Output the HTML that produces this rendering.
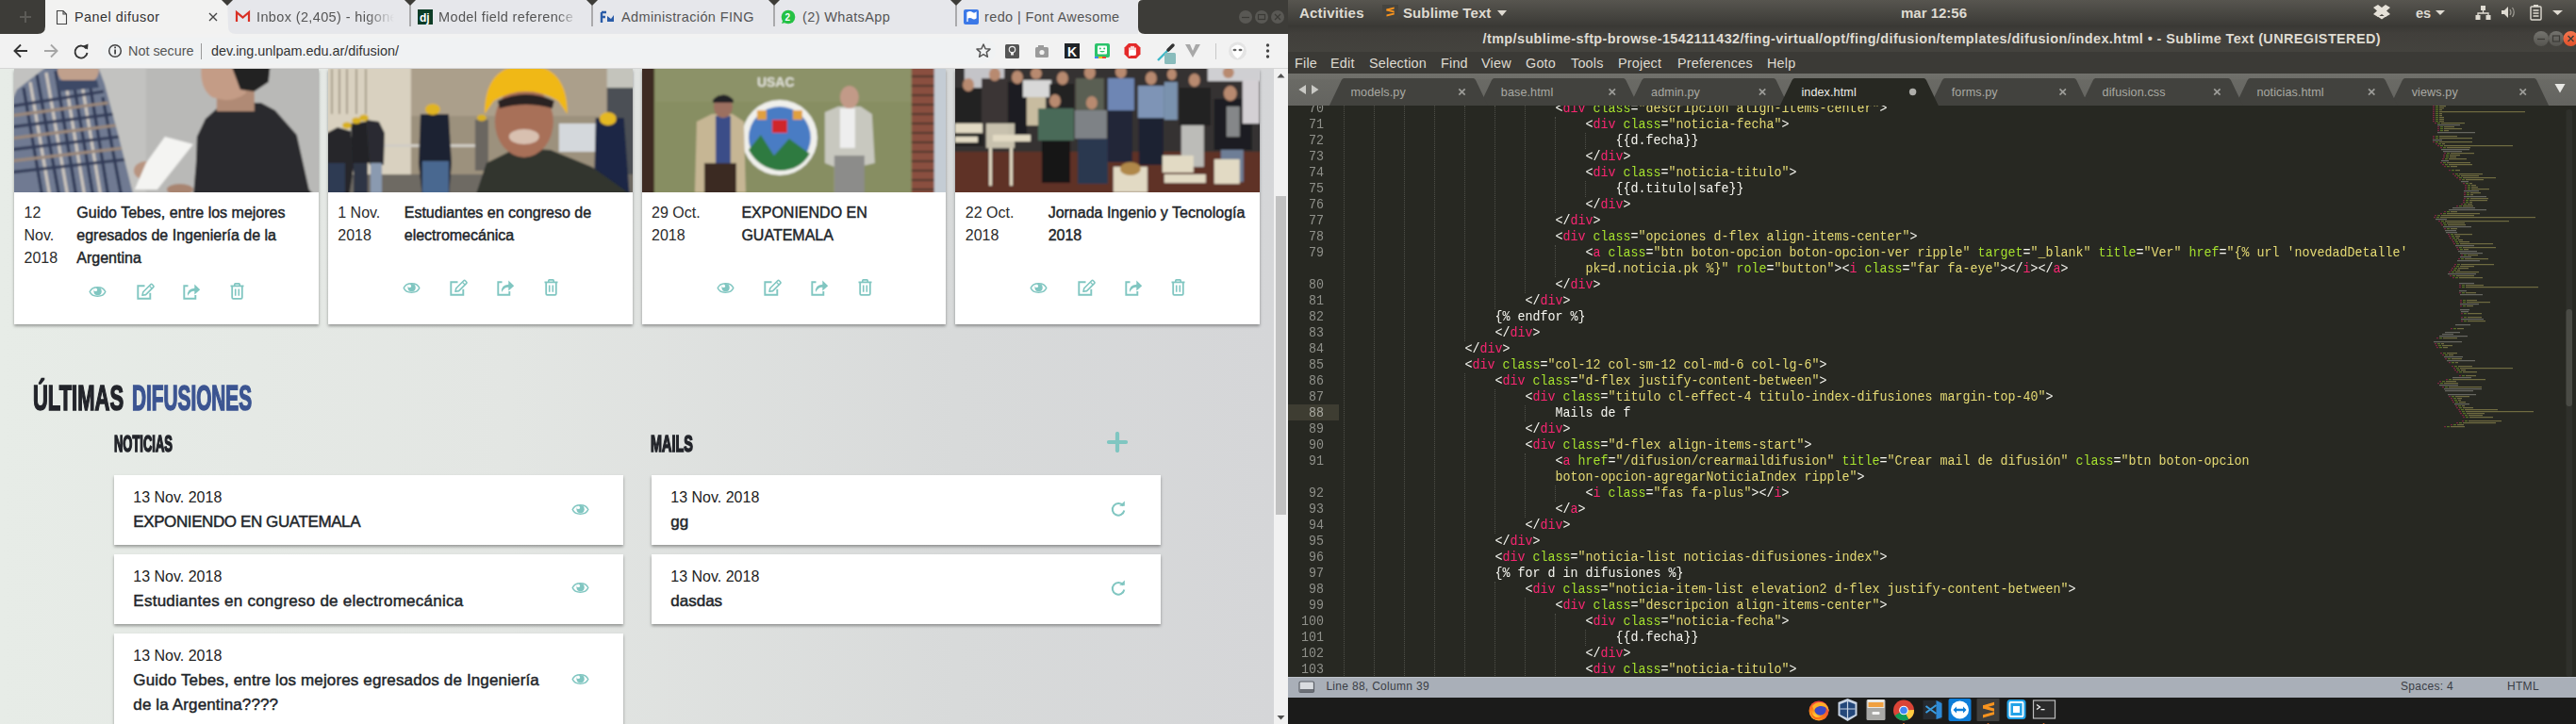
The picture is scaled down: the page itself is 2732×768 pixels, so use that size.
<!DOCTYPE html>
<html><head><meta charset="utf-8">
<style>
*{margin:0;padding:0;box-sizing:border-box}
html,body{width:2732px;height:768px;overflow:hidden;background:#272822}
body{position:relative;font-family:"Liberation Sans",sans-serif}
.abs{position:absolute}
/* ---------- chrome ---------- */
#chrome{position:absolute;left:0;top:0;width:1366px;height:768px;overflow:hidden;background:#e4e9e5}
#tabstrip{position:absolute;left:0;top:0;width:1366px;height:36px;background:#3c3b37}
.ctab{position:absolute;top:0;height:36px;font-size:14.5px;color:#5f6368;white-space:nowrap;overflow:hidden}
#toolbar{position:absolute;left:0;top:36px;width:1366px;height:37px;background:#f2f2f2;border-bottom:1px solid #d6d6d6}
#content{position:absolute;left:0;top:73px;width:1351px;height:695px;overflow:hidden;
 background:linear-gradient(90deg,#e7ece7 0%,#e3e6e3 40%,#d8dada 75%,#d5d6d8 100%)}
#vscroll{position:absolute;left:1351px;top:73px;width:15px;height:695px;background:#f1f1f1}
.card{position:absolute;background:#fff;box-shadow:0 2px 3px rgba(0,0,0,.35)}
.photo{position:absolute;left:0;top:0;width:100%;height:131px;overflow:hidden}
.date{position:absolute;font-size:16px;line-height:24px;color:#2b2b2b}
.ttl{position:absolute;font-size:16px;line-height:24px;color:#212529;-webkit-text-stroke:0.45px #212529}
.ic{position:absolute}
.h1{position:absolute;font-weight:bold;white-space:nowrap;transform-origin:0 0;-webkit-text-stroke:1.6px currentColor}
.item{position:absolute;background:#fff;box-shadow:0 2px 3px rgba(0,0,0,.35)}
.idate{position:absolute;left:20.3px;font-size:16px;color:#222;white-space:nowrap}
.ititle{position:absolute;left:20.3px;font-size:17px;line-height:25px;color:#212529;-webkit-text-stroke:0.45px #212529}
/* ---------- sublime ---------- */
#sub{position:absolute;left:1366px;top:0;width:1366px;height:768px;overflow:hidden;background:#272822}
#topbar{position:absolute;left:0;top:0;width:1366px;height:27px;background:linear-gradient(#57554f,#3b3a36)}
#titlebar{position:absolute;left:0;top:27px;width:1366px;height:28px;background:linear-gradient(#393834,#413f3b 30%,#44433e)}
#menubar{position:absolute;left:0;top:55px;width:1366px;height:23px;background:#3b3a36}
#tabbar{position:absolute;left:0;top:78px;width:1366px;height:34px;background:#5a5a56}
#editor{position:absolute;left:0;top:112px;width:1366px;height:606px;background:#272822;overflow:hidden}
#status{position:absolute;left:0;top:718px;width:1366px;height:22px;background:#a9afb8}
#dock{position:absolute;left:0;top:740px;width:1366px;height:28px;background:#1b1b1a}
.ln{position:absolute;left:1366px;width:54px;height:17px;padding-right:16px;text-align:right;font-family:"Liberation Mono",monospace;font-size:13.33px;line-height:17px;color:#8f908a}
.ln.cur{color:#a8a8a0}
.cl{position:absolute;height:17px;font-family:"Liberation Mono",monospace;font-size:13.33px;line-height:17px;color:#f8f8f2;white-space:pre}
.cl,.ln{transform:scaleY(1.1);transform-origin:0 13px}
.cl .t{color:#f92672}.cl .a{color:#a6e22e}.cl .s{color:#e6db74}
.mi{top:4px;font-size:14.4px;letter-spacing:0.2px;color:#dfdbd2;white-space:nowrap}
.g{position:absolute;width:1px;border-left:1px dotted #4f5049;margin-left:-1px}
</style></head><body>
<div id="chrome">
 <div id="tabstrip">
  <svg class="abs" style="left:0;top:0" width="1366" height="36">
   <rect x="0" y="0" width="1366" height="36" fill="#f2f2f1"/>
   <path d="M0 0 H48 V28 Q48 36 40 36 H0 Z" fill="#3d3c38"/>
   <path d="M48 36 V8 Q48 0 56 0 H233 Q241 0 241 8 V36 Z" fill="#f2f2f1"/>
   <path d="M241 0 H1207 V36 H250 Q242 36 242 28 Z" fill="#e6e7eb"/>
   <path d="M1207 0 H1366 V36 H1214 Q1207 36 1207 29 V5 Q1207 0 1212 0 Z" fill="#3d3c38"/>
   <path d="M235 0 H247 L241 6 Z" fill="#3d3c38"/>
   <path d="M429 0 H441 L435 6 Z" fill="#3d3c38"/><rect x="434.5" y="5" width="1" height="23" fill="#6f6f6f"/>
   <path d="M622 0 H634 L628 6 Z" fill="#3d3c38"/><rect x="627.5" y="5" width="1" height="23" fill="#6f6f6f"/>
   <path d="M815 0 H827 L821 6 Z" fill="#3d3c38"/><rect x="820.5" y="5" width="1" height="23" fill="#6f6f6f"/>
   <path d="M1008 0 H1020 L1014 6 Z" fill="#3d3c38"/><rect x="1013.5" y="5" width="1" height="23" fill="#6f6f6f"/>
   <!-- new tab plus -->
   <path d="M27 12 V24 M21 18 H33" stroke="#5c5b57" stroke-width="2"/>
   <!-- page icon -->
   <path d="M60.5 11.5 H67 L70.5 15 V25.5 H60.5 Z M67 11.5 V15 H70.5" fill="none" stroke="#444" stroke-width="1.1"/>
   <!-- close x -->
   <path d="M222 14 L230 22 M230 14 L222 22" stroke="#444" stroke-width="1.4"/>
   <!-- gmail -->
   <path d="M251 23 V13 L257.5 18.5 L264 13 V23" fill="none" stroke="#d93025" stroke-width="2.2"/>
   <!-- django -->
   <rect x="443" y="10" width="16" height="16" fill="#0c3c26"/>
   <text x="445" y="23" font-size="12" font-weight="bold" fill="#fff" font-family="Liberation Sans">dj</text>
   <!-- fing -->
   <path d="M638 13 H643 M638 13 V24 M638 18 H642" stroke="#2a5ca8" stroke-width="2.4" fill="none"/>
   <path d="M644 17 L648 20 L651 16 V23 H644 Z" fill="#2a5ca8"/>
   <!-- whatsapp -->
   <circle cx="836" cy="18" r="7.3" fill="#25c145"/><path d="M829 25 L830.5 21 L833 24 Z" fill="#25c145"/>
   <text x="832.6" y="22" font-size="10" font-weight="bold" fill="#fff" font-family="Liberation Sans">2</text>
   <!-- font awesome -->
   <rect x="1022" y="10" width="16" height="16" rx="2" fill="#3b78e7"/>
   <path d="M1026 13 V23 M1026 13.5 Q1029 12 1031 13.5 Q1033 15 1035 13.5 V19 Q1033 20.5 1031 19 Q1029 17.5 1026 19" fill="#fff" stroke="#fff" stroke-width="1.3"/>
   <!-- window controls -->
   <circle cx="1321" cy="18" r="7" fill="#595854"/><circle cx="1338" cy="18" r="7" fill="#595854"/><circle cx="1355" cy="18" r="7" fill="#595854"/>
   <path d="M1317 18.5 H1325" stroke="#3b3a36" stroke-width="1.2"/>
   <rect x="1334.5" y="15.5" width="7" height="5" fill="none" stroke="#3b3a36" stroke-width="1.2"/>
   <path d="M1352 15 L1358 21 M1358 15 L1352 21" stroke="#3b3a36" stroke-width="1.2"/>
  </svg>
  <div class="ctab" style="left:79px;top:10px;color:#333;font-size:14.4px;letter-spacing:0.5px">Panel difusor</div>
  <div class="ctab" style="left:272px;top:10px;letter-spacing:0.37px;width:146px;-webkit-mask-image:linear-gradient(90deg,#000 80%,transparent);color:#555">Inbox (2,405) - higonet</div>
  <div class="ctab" style="left:465px;top:10px;letter-spacing:0.37px;width:148px;-webkit-mask-image:linear-gradient(90deg,#000 85%,transparent);color:#555">Model field reference |</div>
  <div class="ctab" style="left:659px;top:10px;letter-spacing:0.37px;color:#555">Administración FING</div>
  <div class="ctab" style="left:851px;top:10px;letter-spacing:0.37px;color:#555">(2) WhatsApp</div>
  <div class="ctab" style="left:1044px;top:10px;letter-spacing:0.37px;color:#555">redo | Font Awesome</div>
 </div>
 <div id="toolbar">
  <svg class="abs" style="left:0;top:0" width="1366" height="37">
   <rect x="108" y="3.7" width="948" height="28" rx="14" fill="#f0f2f3"/>
   <!-- back -->
   <path d="M29 18 H16 M22 11.5 L15.5 18 L22 24.5" fill="none" stroke="#333" stroke-width="1.9"/>
   <path d="M47 18 H60 M54 11.5 L60.5 18 L54 24.5" fill="none" stroke="#a6a6a6" stroke-width="1.9"/>
   <!-- reload -->
   <path d="M91.5 15.5 A6.5 6.5 0 1 0 92.5 20" fill="none" stroke="#333" stroke-width="1.9"/>
   <path d="M87.5 13 L93.5 10.5 L93 16.5 Z" fill="#333"/>
   <!-- info -->
   <circle cx="122" cy="18" r="6.3" fill="none" stroke="#444" stroke-width="1.5"/>
   <rect x="121.2" y="16.5" width="1.8" height="5" fill="#444"/><rect x="121.2" y="13.5" width="1.8" height="1.8" fill="#444"/>
   <rect x="213" y="10" width="1" height="17" fill="#999"/>
   <!-- star -->
   <path d="M1043 11 L1045.1 15.7 L1050 16.1 L1046.3 19.4 L1047.4 24.3 L1043 21.7 L1038.6 24.3 L1039.7 19.4 L1036 16.1 L1040.9 15.7 Z" fill="none" stroke="#555" stroke-width="1.5" stroke-linejoin="round"/>
   <!-- bulb -->
   <rect x="1066" y="11" width="15" height="15" rx="1.5" fill="#555"/>
   <circle cx="1073.5" cy="16.5" r="3.2" fill="none" stroke="#eee" stroke-width="1.2"/><rect x="1072" y="19.5" width="3" height="3" fill="#eee"/>
   <!-- camera -->
   <rect x="1098" y="14" width="14" height="11" rx="1.5" fill="#9a9a9a"/><rect x="1101" y="12" width="6" height="3" fill="#9a9a9a"/><circle cx="1105" cy="19.5" r="2.6" fill="#f2f2f1"/>
   <!-- K -->
   <rect x="1129" y="10" width="16" height="16" fill="#202428"/>
   <text x="1132" y="23.5" font-size="14" font-weight="bold" fill="#fff" font-family="Liberation Sans">K</text>
   <!-- bitmoji green -->
   <rect x="1161" y="10" width="16" height="15" rx="2" fill="#2bc36b"/><rect x="1164" y="12.5" width="10" height="9" rx="1" fill="#fff"/>
   <circle cx="1166.8" cy="15.5" r="1" fill="#2bc36b"/><circle cx="1171.2" cy="15.5" r="1" fill="#2bc36b"/><path d="M1166 18 Q1169 21 1172 18" fill="#2bc36b"/>
   <rect x="1161" y="24" width="4" height="2" fill="#4285f4"/><rect x="1165" y="24" width="4" height="2" fill="#fbbc05"/><rect x="1169" y="24" width="4" height="2" fill="#ea4335"/>
   <!-- adblock -->
   <path d="M1197 10 H1205 L1209.5 14.5 V21.5 L1205 26 H1197 L1192.5 21.5 V14.5 Z" fill="#e42a2a"/>
   <path d="M1198 23 V15 M1200 22 V13.5 M1202 22 V13.5 M1204 22 V15" stroke="#fff" stroke-width="1.6" stroke-linecap="round"/>
   <rect x="1197.5" y="17" width="7" height="6" rx="2" fill="#fff"/>
   <!-- dropper -->
   <path d="M1228 28 L1240 16" stroke="#3db8c8" stroke-width="2.4"/><path d="M1239 17 L1244 12" stroke="#333" stroke-width="3.5" stroke-linecap="round"/>
   <rect x="1235" y="20" width="12" height="12" rx="1.5" fill="#89bcbc"/>
   <!-- V -->
   <path d="M1257 11 H1262 L1265 18 L1268 11 H1273 L1265 25 Z" fill="#a8a8a8"/>
   <rect x="1289" y="10" width="1" height="17" fill="#c8c8c8"/>
   <!-- alien -->
   <circle cx="1312.5" cy="18" r="9.5" fill="#e4e4e4"/><path d="M1306 15 Q1312.5 8 1319 15 Q1318 23 1312.5 26 Q1307 23 1306 15 Z" fill="#fff"/>
   <ellipse cx="1309.5" cy="17" rx="2" ry="1.2" fill="#666"/><ellipse cx="1315.5" cy="17" rx="2" ry="1.2" fill="#666"/>
   <!-- dots -->
   <circle cx="1344.5" cy="12" r="1.7" fill="#444"/><circle cx="1344.5" cy="18" r="1.7" fill="#444"/><circle cx="1344.5" cy="24" r="1.7" fill="#444"/>
  </svg>
  <div class="abs" style="left:136px;top:10px;font-size:14.4px;color:#555;white-space:nowrap">Not secure</div>
  <div class="abs" style="left:224px;top:10px;font-size:14.4px;color:#333;white-space:nowrap">dev.ing.unlpam.edu.ar/difusion/</div>
 </div>
 <div id="content">
<div class="card" style="left:15.00px;top:0;width:322.75px;height:271px">
<svg class="photo" width="323" height="131" viewBox="0 0 323 131"><defs><filter id="bl1" x="-5%" y="-5%" width="110%" height="110%"><feGaussianBlur stdDeviation="1.2"/></filter></defs><g filter="url(#bl1)">
<rect x="-5" y="-5" width="335" height="145" fill="#c2c2c0"/>
<rect x="140" y="-5" width="190" height="145" fill="#b9b9b7"/>
<clipPath id="shirt1"><path d="M38 -5 H88 L96 16 L111 72 L127 136 H-5 V40 L3 22 Z"/></clipPath>
<path d="M38 -5 H88 L96 16 L111 72 L127 136 H-5 V40 L3 22 Z" fill="#6f7a92"/>
<g stroke-width="3.2" opacity=".9" clip-path="url(#shirt1)">
<path d="M10 20 L30 136 M24 6 L48 136 M44 2 L66 136 M62 8 L84 136 M80 14 L100 136 M94 30 L114 136" stroke="#28324e"/>
<path d="M17 14 L38 136 M34 4 L57 136 M53 4 L75 136 M71 10 L92 136" stroke="#d8cfc4"/>
<path d="M-5 40 L95 24 M-5 62 L105 48 M-5 86 L112 72 M-5 110 L120 96" stroke="#2c3552"/>
<path d="M-5 50 L100 36 M-5 74 L108 60 M-5 98 L116 84" stroke="#a08a78"/>
</g>
<ellipse cx="68" cy="2" rx="22" ry="16" fill="#c0a08c"/>
<path d="M45 12 L88 12 L90 20 L48 24 Z" fill="#3e4a66"/>
<ellipse cx="140" cy="108" rx="13" ry="10" fill="#b89480"/>
<path d="M160 72 L190 80 L152 128 L128 128 L140 100 Z" fill="#f4f4f2"/>
<path d="M194 72 L203 53 L222 36 L262 36 L277 44 L300 70 L313 128 L320 136 H190 L193 100 Z" fill="#2b2b2d"/>
<path d="M215 20 H255 V45 H215 Z" fill="#b08a74"/>
<path d="M199 -5 H243 L246 26 Q230 38 210 30 Q196 20 199 -5 Z" fill="#c49c86"/>
<path d="M230 -5 H272 L270 14 L255 24 L240 22 Z" fill="#222020"/>
<ellipse cx="176" cy="128" rx="14" ry="6" fill="#a88470"/>
</g></svg>
<div class="date" style="left:10.5px;top:140.5px">12<br>Nov.<br>2018</div>
<div class="ttl" style="left:66.3px;top:140.5px;white-space:nowrap">Guido Tebes, entre los mejores<br>egresados de Ingeniería de la<br>Argentina</div>
<svg class="ic" style="left:79.0px;top:229.5px" width="19" height="13" viewBox="0 0 19 13"><path d="M1.2 6.5 C3.8 0.2 15.2 0.2 17.8 6.5 C15.2 12.8 3.8 12.8 1.2 6.5 Z" fill="none" stroke="#80c6c1" stroke-width="1.5"/><circle cx="9.6" cy="6.2" r="4.1" fill="#80c6c1"/><circle cx="7.4" cy="4.4" r="1.7" fill="#fff"/></svg><svg class="ic" style="left:129.5px;top:227.0px" width="19" height="18" viewBox="0 0 19 18"><path d="M8.5 3.3 H1.3 V16.8 H14.3 V10.8" fill="none" stroke="#80c6c1" stroke-width="1.9"/><path d="M6 13.3 L6.8 9.8 L14.8 1.8 Q15.6 1 16.4 1.8 L17.6 3 Q18.4 3.8 17.6 4.6 L9.6 12.6 Z" fill="none" stroke="#80c6c1" stroke-width="1.6" stroke-linejoin="round"/><path d="M13.4 3.3 L16.2 6.1" stroke="#80c6c1" stroke-width="1.3"/></svg><svg class="ic" style="left:179.3px;top:227.0px" width="19" height="18" viewBox="0 0 19 18"><path d="M5.5 3.3 H1.3 V16.8 H13.3 V13" fill="none" stroke="#80c6c1" stroke-width="1.9"/><path d="M5 14 Q4.2 6.2 12.3 5.8 V1.6 L18.2 7.2 L12.3 12.6 V8.8 Q7.8 8.6 5 14 Z" fill="#80c6c1"/></svg><svg class="ic" style="left:229.0px;top:227.0px" width="15" height="18" viewBox="0 0 15 18"><path d="M0.5 3.4 H14.5" stroke="#80c6c1" stroke-width="1.8"/><path d="M4.8 3 V1.6 Q4.8 0.9 5.6 0.9 H9.4 Q10.2 0.9 10.2 1.6 V3" fill="none" stroke="#80c6c1" stroke-width="1.6"/><path d="M2.2 3.8 V15.6 Q2.2 16.9 3.4 16.9 H11.6 Q12.8 16.9 12.8 15.6 V3.8" fill="none" stroke="#80c6c1" stroke-width="1.8"/><path d="M5.7 6.5 V13.8 M9.3 6.5 V13.8" stroke="#80c6c1" stroke-width="1.6"/></svg>
</div>
<div class="card" style="left:347.75px;top:0;width:322.75px;height:271px">
<svg class="photo" width="323" height="131" viewBox="0 0 323 131"><defs><filter id="bl2" x="-5%" y="-5%" width="110%" height="110%"><feGaussianBlur stdDeviation="1.2"/></filter></defs><g filter="url(#bl2)">
<rect x="-5" y="-5" width="335" height="145" fill="#9a8e7e"/>
<rect x="-5" y="-5" width="93" height="120" fill="#d9d1c0"/>
<path d="M4 0 V48 M12 0 V48 M20 0 V48 M30 0 V48 M40 0 V48" stroke="#a89e8c" stroke-width="2"/>
<rect x="88" y="-5" width="210" height="55" fill="#ab9f8b"/>
<rect x="88" y="50" width="210" height="62" fill="#9c917d"/>
<rect x="296" y="-5" width="34" height="25" fill="#c4c4bc"/><rect x="296" y="20" width="34" height="116" fill="#4c5054"/>
<rect x="-5" y="112" width="335" height="28" fill="#6e6a64"/>
<rect x="55" y="80" width="110" height="3" fill="#d0ccc4"/>
<path d="M-5 70 L10 62 L24 66 L28 100 L22 136 H-5 Z" fill="#26282c"/>
<path d="M24 58 L40 56 L46 64 L44 100 H26 Z" fill="#222428"/>
<path d="M40 54 L54 56 L60 68 L59 102 H44 Z" fill="#2a2c30"/>
<rect x="0" y="100" width="18" height="36" fill="#2e3a52"/><rect x="27" y="100" width="15" height="36" fill="#2e3444"/><rect x="45" y="100" width="12" height="32" fill="#8a9ab0"/>
<ellipse cx="20" cy="60" rx="5" ry="3.5" fill="#d8b020"/><ellipse cx="30" cy="55" rx="5" ry="3.5" fill="#d8b020"/><ellipse cx="38" cy="52" rx="5" ry="3.5" fill="#d8b020"/>
<path d="M98 48 L128 48 L131 100 L128 136 H100 L96 100 Z" fill="#1f2430"/>
<rect x="100" y="98" width="28" height="38" fill="#4a6890"/>
<ellipse cx="111" cy="43" rx="8" ry="6" fill="#e0b420"/>
<rect x="156" y="54" width="14" height="54" fill="#6a6660"/><ellipse cx="163" cy="52" rx="5" ry="3.5" fill="#d8b020"/>
<path d="M245 58 H285 V88 H245 Z" fill="#d4d8dc"/>
<path d="M284 52 L314 52 L320 136 H282 Z" fill="#1e2844"/>
<ellipse cx="297" cy="53" rx="9" ry="7" fill="#e4b820"/>
<path d="M156 136 L168 100 L200 84 L236 86 L280 104 L325 136 Z" fill="#30342e"/>
<ellipse cx="208" cy="56" rx="31" ry="38" fill="#a87058"/>
<ellipse cx="208" cy="72" rx="16" ry="8" fill="#d8c0b0"/>
<path d="M166 48 Q166 -4 210 -4 Q254 -4 254 48 L244 34 Q210 14 176 34 Z" fill="#f0b818"/>
<path d="M180 34 Q210 20 240 34 L238 42 Q210 34 182 42 Z" fill="#2a2220"/>
</g></svg>
<div class="date" style="left:10.5px;top:140.5px">1 Nov.<br>2018</div>
<div class="ttl" style="left:81.0px;top:140.5px;white-space:nowrap">Estudiantes en congreso de<br>electromecánica</div>
<svg class="ic" style="left:79.0px;top:225.5px" width="19" height="13" viewBox="0 0 19 13"><path d="M1.2 6.5 C3.8 0.2 15.2 0.2 17.8 6.5 C15.2 12.8 3.8 12.8 1.2 6.5 Z" fill="none" stroke="#80c6c1" stroke-width="1.5"/><circle cx="9.6" cy="6.2" r="4.1" fill="#80c6c1"/><circle cx="7.4" cy="4.4" r="1.7" fill="#fff"/></svg><svg class="ic" style="left:129.5px;top:223.0px" width="19" height="18" viewBox="0 0 19 18"><path d="M8.5 3.3 H1.3 V16.8 H14.3 V10.8" fill="none" stroke="#80c6c1" stroke-width="1.9"/><path d="M6 13.3 L6.8 9.8 L14.8 1.8 Q15.6 1 16.4 1.8 L17.6 3 Q18.4 3.8 17.6 4.6 L9.6 12.6 Z" fill="none" stroke="#80c6c1" stroke-width="1.6" stroke-linejoin="round"/><path d="M13.4 3.3 L16.2 6.1" stroke="#80c6c1" stroke-width="1.3"/></svg><svg class="ic" style="left:179.3px;top:223.0px" width="19" height="18" viewBox="0 0 19 18"><path d="M5.5 3.3 H1.3 V16.8 H13.3 V13" fill="none" stroke="#80c6c1" stroke-width="1.9"/><path d="M5 14 Q4.2 6.2 12.3 5.8 V1.6 L18.2 7.2 L12.3 12.6 V8.8 Q7.8 8.6 5 14 Z" fill="#80c6c1"/></svg><svg class="ic" style="left:229.0px;top:223.0px" width="15" height="18" viewBox="0 0 15 18"><path d="M0.5 3.4 H14.5" stroke="#80c6c1" stroke-width="1.8"/><path d="M4.8 3 V1.6 Q4.8 0.9 5.6 0.9 H9.4 Q10.2 0.9 10.2 1.6 V3" fill="none" stroke="#80c6c1" stroke-width="1.6"/><path d="M2.2 3.8 V15.6 Q2.2 16.9 3.4 16.9 H11.6 Q12.8 16.9 12.8 15.6 V3.8" fill="none" stroke="#80c6c1" stroke-width="1.8"/><path d="M5.7 6.5 V13.8 M9.3 6.5 V13.8" stroke="#80c6c1" stroke-width="1.6"/></svg>
</div>
<div class="card" style="left:680.50px;top:0;width:322.75px;height:271px">
<svg class="photo" width="323" height="131" viewBox="0 0 323 131"><defs><filter id="bl3" x="-5%" y="-5%" width="110%" height="110%"><feGaussianBlur stdDeviation="1.2"/></filter></defs><g filter="url(#bl3)">
<rect x="-5" y="-5" width="335" height="145" fill="#878e62"/>
<rect x="14" y="-5" width="272" height="40" fill="#8d946a" opacity=".8"/>
<rect x="-5" y="-5" width="18" height="145" fill="#3e2a22"/>
<rect x="286" y="-5" width="25" height="145" fill="#8a5040"/>
<path d="M286 8 H311 M286 18 H311 M286 28 H311 M286 38 H311 M286 48 H311 M286 58 H311 M286 68 H311 M286 78 H311 M286 88 H311 M286 98 H311 M286 108 H311 M286 118 H311 M286 128 H311" stroke="#4a342c" stroke-width="2"/>
<rect x="310" y="-5" width="18" height="145" fill="#c4ccd4"/>
<text x="122" y="19" font-size="14" font-weight="bold" fill="#e4e4dc" font-family="Liberation Sans">USAC</text>
<circle cx="146" cy="73" r="40" fill="#f0f0ec"/>
<circle cx="146" cy="73" r="33" fill="#4a7cc4"/>
<path d="M113 86 L126 70 L140 92 L156 74 L178 90 Q168 108 146 108 Q124 106 113 86 Z" fill="#2e7a40"/>
<rect x="138" y="54" width="16" height="14" fill="#d0282a"/><rect x="122" y="44" width="10" height="10" fill="#e0a040"/><rect x="160" y="44" width="10" height="10" fill="#e0a040"/>
<path d="M58 56 L74 48 H96 L108 56 L110 131 H56 Z" fill="#c6b694"/>
<rect x="78" y="50" width="16" height="50" fill="#3a4e88"/>
<rect x="66" y="100" width="34" height="36" fill="#3a2a24"/>
<ellipse cx="86" cy="40" rx="10" ry="12" fill="#9c7060"/>
<path d="M75 33 Q86 22 97 33 V36 H75 Z" fill="#202028"/>
<path d="M194 46 L208 40 H232 L244 48 L247 100 L230 104 V136 H204 V104 L194 100 Z" fill="#c8c8bf"/>
<rect x="210" y="42" width="16" height="42" fill="#eeeeee"/>
<rect x="204" y="92" width="32" height="44" fill="#8c8c8a"/>
<ellipse cx="220" cy="30" rx="10" ry="12" fill="#c29a88"/>
</g></svg>
<div class="date" style="left:10.5px;top:140.5px">29 Oct.<br>2018</div>
<div class="ttl" style="left:105.9px;top:140.5px;white-space:nowrap">EXPONIENDO EN<br>GUATEMALA</div>
<svg class="ic" style="left:79.0px;top:225.5px" width="19" height="13" viewBox="0 0 19 13"><path d="M1.2 6.5 C3.8 0.2 15.2 0.2 17.8 6.5 C15.2 12.8 3.8 12.8 1.2 6.5 Z" fill="none" stroke="#80c6c1" stroke-width="1.5"/><circle cx="9.6" cy="6.2" r="4.1" fill="#80c6c1"/><circle cx="7.4" cy="4.4" r="1.7" fill="#fff"/></svg><svg class="ic" style="left:129.5px;top:223.0px" width="19" height="18" viewBox="0 0 19 18"><path d="M8.5 3.3 H1.3 V16.8 H14.3 V10.8" fill="none" stroke="#80c6c1" stroke-width="1.9"/><path d="M6 13.3 L6.8 9.8 L14.8 1.8 Q15.6 1 16.4 1.8 L17.6 3 Q18.4 3.8 17.6 4.6 L9.6 12.6 Z" fill="none" stroke="#80c6c1" stroke-width="1.6" stroke-linejoin="round"/><path d="M13.4 3.3 L16.2 6.1" stroke="#80c6c1" stroke-width="1.3"/></svg><svg class="ic" style="left:179.3px;top:223.0px" width="19" height="18" viewBox="0 0 19 18"><path d="M5.5 3.3 H1.3 V16.8 H13.3 V13" fill="none" stroke="#80c6c1" stroke-width="1.9"/><path d="M5 14 Q4.2 6.2 12.3 5.8 V1.6 L18.2 7.2 L12.3 12.6 V8.8 Q7.8 8.6 5 14 Z" fill="#80c6c1"/></svg><svg class="ic" style="left:229.0px;top:223.0px" width="15" height="18" viewBox="0 0 15 18"><path d="M0.5 3.4 H14.5" stroke="#80c6c1" stroke-width="1.8"/><path d="M4.8 3 V1.6 Q4.8 0.9 5.6 0.9 H9.4 Q10.2 0.9 10.2 1.6 V3" fill="none" stroke="#80c6c1" stroke-width="1.6"/><path d="M2.2 3.8 V15.6 Q2.2 16.9 3.4 16.9 H11.6 Q12.8 16.9 12.8 15.6 V3.8" fill="none" stroke="#80c6c1" stroke-width="1.8"/><path d="M5.7 6.5 V13.8 M9.3 6.5 V13.8" stroke="#80c6c1" stroke-width="1.6"/></svg>
</div>
<div class="card" style="left:1013.25px;top:0;width:322.75px;height:271px">
<svg class="photo" width="323" height="131" viewBox="0 0 323 131"><defs><filter id="bl4" x="-5%" y="-5%" width="110%" height="110%"><feGaussianBlur stdDeviation="1.2"/></filter></defs><g filter="url(#bl4)">
<rect x="-5" y="-5" width="335" height="145" fill="#353030"/>
<rect x="10" y="-5" width="42" height="26" fill="#c4c4c8"/>
<rect x="268" y="-5" width="60" height="18" fill="#cfcfd2"/>
<rect x="-5" y="88" width="335" height="55" fill="#5e3028"/>
<g>
<rect x="0" y="20" width="30" height="62" fill="#242424"/>
<rect x="28" y="10" width="28" height="60" fill="#3a3434"/>
<rect x="56" y="14" width="20" height="60" fill="#1e1e20"/>
<rect x="72" y="12" width="30" height="18" fill="#d8d8d8"/>
<rect x="76" y="30" width="20" height="30" fill="#c8bca0"/>
<rect x="100" y="16" width="26" height="36" fill="#222222"/>
<rect x="128" y="10" width="30" height="46" fill="#5a5e52"/>
<rect x="88" y="42" width="38" height="34" fill="#4a6a58"/><rect x="92" y="76" width="30" height="45" fill="#161616"/>
<rect x="127" y="44" width="34" height="30" fill="#7e8286"/><rect x="130" y="74" width="32" height="48" fill="#2c3850"/>
<rect x="162" y="10" width="28" height="34" fill="#6e86b4"/><rect x="162" y="44" width="26" height="55" fill="#222638"/>
<rect x="194" y="18" width="28" height="34" fill="#7e94b6"/><rect x="195" y="52" width="26" height="50" fill="#1e2230"/>
<rect x="222" y="14" width="14" height="40" fill="#7a92ae"/>
<rect x="238" y="20" width="33" height="40" fill="#202022"/><rect x="240" y="60" width="24" height="44" fill="#bcbcb8"/>
<rect x="275" y="32" width="40" height="54" fill="#1e1e20"/><rect x="288" y="40" width="14" height="32" fill="#858789"/><rect x="282" y="86" width="24" height="34" fill="#6e7e96"/>
<rect x="305" y="12" width="18" height="46" fill="#d4d0d4"/>
</g>
<g fill="#b88a70">
<ellipse cx="14" cy="17" rx="6" ry="7"/><ellipse cx="42" cy="6" rx="6" ry="7"/><ellipse cx="66" cy="9" rx="6" ry="7"/><ellipse cx="86" cy="5" rx="6" ry="6"/>
<ellipse cx="114" cy="10" rx="6" ry="7"/><ellipse cx="143" cy="4" rx="6" ry="7"/><ellipse cx="176" cy="3" rx="6" ry="7"/><ellipse cx="208" cy="10" rx="6" ry="7"/>
<ellipse cx="254" cy="12" rx="6" ry="7"/><ellipse cx="292" cy="26" rx="7" ry="8"/><ellipse cx="106" cy="34" rx="6" ry="7"/><ellipse cx="145" cy="36" rx="6" ry="7"/>
<ellipse cx="290" cy="4" rx="6" ry="6"/><ellipse cx="230" cy="6" rx="5" ry="6"/>
</g>
<g fill="#e2dac4">
<rect x="0" y="58" width="29" height="10"/><rect x="0" y="72" width="24" height="6"/>
<rect x="33" y="58" width="30" height="26" opacity=".85"/><rect x="40" y="70" width="40" height="7"/><rect x="36" y="84" width="3" height="40"/><rect x="58" y="84" width="3" height="40"/>
<rect x="168" y="104" width="36" height="27"/>
<rect x="220" y="92" width="33" height="18"/><rect x="222" y="112" width="44" height="9"/>
<rect x="275" y="96" width="27" height="26"/>
</g>
<ellipse cx="186" cy="106" rx="11" ry="7" fill="#b08848"/>
</g></svg>
<div class="date" style="left:10.5px;top:140.5px">22 Oct.<br>2018</div>
<div class="ttl" style="left:98.4px;top:140.5px;white-space:nowrap">Jornada Ingenio y Tecnología<br>2018</div>
<svg class="ic" style="left:79.0px;top:225.5px" width="19" height="13" viewBox="0 0 19 13"><path d="M1.2 6.5 C3.8 0.2 15.2 0.2 17.8 6.5 C15.2 12.8 3.8 12.8 1.2 6.5 Z" fill="none" stroke="#80c6c1" stroke-width="1.5"/><circle cx="9.6" cy="6.2" r="4.1" fill="#80c6c1"/><circle cx="7.4" cy="4.4" r="1.7" fill="#fff"/></svg><svg class="ic" style="left:129.5px;top:223.0px" width="19" height="18" viewBox="0 0 19 18"><path d="M8.5 3.3 H1.3 V16.8 H14.3 V10.8" fill="none" stroke="#80c6c1" stroke-width="1.9"/><path d="M6 13.3 L6.8 9.8 L14.8 1.8 Q15.6 1 16.4 1.8 L17.6 3 Q18.4 3.8 17.6 4.6 L9.6 12.6 Z" fill="none" stroke="#80c6c1" stroke-width="1.6" stroke-linejoin="round"/><path d="M13.4 3.3 L16.2 6.1" stroke="#80c6c1" stroke-width="1.3"/></svg><svg class="ic" style="left:179.3px;top:223.0px" width="19" height="18" viewBox="0 0 19 18"><path d="M5.5 3.3 H1.3 V16.8 H13.3 V13" fill="none" stroke="#80c6c1" stroke-width="1.9"/><path d="M5 14 Q4.2 6.2 12.3 5.8 V1.6 L18.2 7.2 L12.3 12.6 V8.8 Q7.8 8.6 5 14 Z" fill="#80c6c1"/></svg><svg class="ic" style="left:229.0px;top:223.0px" width="15" height="18" viewBox="0 0 15 18"><path d="M0.5 3.4 H14.5" stroke="#80c6c1" stroke-width="1.8"/><path d="M4.8 3 V1.6 Q4.8 0.9 5.6 0.9 H9.4 Q10.2 0.9 10.2 1.6 V3" fill="none" stroke="#80c6c1" stroke-width="1.6"/><path d="M2.2 3.8 V15.6 Q2.2 16.9 3.4 16.9 H11.6 Q12.8 16.9 12.8 15.6 V3.8" fill="none" stroke="#80c6c1" stroke-width="1.8"/><path d="M5.7 6.5 V13.8 M9.3 6.5 V13.8" stroke="#80c6c1" stroke-width="1.6"/></svg>
</div>
<div class="h1" style="left:35px;top:330.7px;font-size:37px;line-height:37px;color:#22242a;transform:scaleX(0.594)">ÚLTIMAS</div>
<div class="h1" style="left:140px;top:330.7px;font-size:37px;line-height:37px;color:#3b5491;transform:scaleX(0.562)">DIFUSIONES</div>
<div class="h1" style="left:121px;top:385.7px;font-size:24px;line-height:24px;color:#22242a;transform:scaleX(0.54)">NOTICIAS</div>
<div class="h1" style="left:690.4px;top:385.7px;font-size:24px;line-height:24px;color:#22242a;transform:scaleX(0.6)">MAILS</div>
<svg class="ic" style="left:1174.0px;top:385.0px" width="22" height="22" viewBox="0 0 22 22"><path d="M11 2 V20 M2 11 H20" stroke="#80c6c1" stroke-width="4.2" stroke-linecap="round"/></svg>
<div class="item" style="left:121px;top:431.0px;width:540px;height:73.7px">
<div class="idate" style="top:11.6px;line-height:24px">13 Nov. 2018</div>
<div class="ititle" style="top:37px;line-height:26px;letter-spacing:-0.4px">EXPONIENDO EN GUATEMALA</div>
<svg class="ic" style="left:484.5px;top:29.5px" width="19" height="13" viewBox="0 0 19 13"><path d="M1.2 6.5 C3.8 0.2 15.2 0.2 17.8 6.5 C15.2 12.8 3.8 12.8 1.2 6.5 Z" fill="none" stroke="#80c6c1" stroke-width="1.5"/><circle cx="9.6" cy="6.2" r="4.1" fill="#80c6c1"/><circle cx="7.4" cy="4.4" r="1.7" fill="#fff"/></svg>
</div>
<div class="item" style="left:121px;top:515.0px;width:540px;height:74.0px">
<div class="idate" style="top:11.6px;line-height:24px">13 Nov. 2018</div>
<div class="ititle" style="top:37px;line-height:26px;letter-spacing:0.26px">Estudiantes en congreso de electromecánica</div>
<svg class="ic" style="left:484.5px;top:29.2px" width="19" height="13" viewBox="0 0 19 13"><path d="M1.2 6.5 C3.8 0.2 15.2 0.2 17.8 6.5 C15.2 12.8 3.8 12.8 1.2 6.5 Z" fill="none" stroke="#80c6c1" stroke-width="1.5"/><circle cx="9.6" cy="6.2" r="4.1" fill="#80c6c1"/><circle cx="7.4" cy="4.4" r="1.7" fill="#fff"/></svg>
</div>
<div class="item" style="left:121px;top:599.0px;width:540px;height:120.0px">
<div class="idate" style="top:11.6px;line-height:24px">13 Nov. 2018</div>
<div class="ititle" style="top:37px;line-height:26px;letter-spacing:0.14px">Guido Tebes, entre los mejores egresados de Ingeniería<br>de la Argentina????</div>
<svg class="ic" style="left:484.5px;top:42.1px" width="19" height="13" viewBox="0 0 19 13"><path d="M1.2 6.5 C3.8 0.2 15.2 0.2 17.8 6.5 C15.2 12.8 3.8 12.8 1.2 6.5 Z" fill="none" stroke="#80c6c1" stroke-width="1.5"/><circle cx="9.6" cy="6.2" r="4.1" fill="#80c6c1"/><circle cx="7.4" cy="4.4" r="1.7" fill="#fff"/></svg>
</div>
<div class="item" style="left:691px;top:431.0px;width:540px;height:73.7px">
<div class="idate" style="top:11.6px;line-height:24px">13 Nov. 2018</div>
<div class="ititle" style="top:37px;line-height:26px">gg</div>
<svg class="ic" style="left:486.0px;top:27.0px" width="18" height="18" viewBox="0 0 18 18"><path d="M14.2 5.6 A6.3 6.3 0 1 0 15.3 10.5" fill="none" stroke="#80c6c1" stroke-width="2"/><path d="M10.2 5.8 H15.8 V0.4 Z" fill="#80c6c1"/></svg>
</div>
<div class="item" style="left:691px;top:515.0px;width:540px;height:74.0px">
<div class="idate" style="top:11.6px;line-height:24px">13 Nov. 2018</div>
<div class="ititle" style="top:37px;line-height:26px">dasdas</div>
<svg class="ic" style="left:486.0px;top:27.0px" width="18" height="18" viewBox="0 0 18 18"><path d="M14.2 5.6 A6.3 6.3 0 1 0 15.3 10.5" fill="none" stroke="#80c6c1" stroke-width="2"/><path d="M10.2 5.8 H15.8 V0.4 Z" fill="#80c6c1"/></svg>
</div>
</div>
 <div id="vscroll"><svg class="abs" style="left:0;top:0" width="15" height="695"><path d="M3.5 9.5 H11.5 L7.5 5 Z M3.5 686 H11.5 L7.5 690.5 Z" fill="#505050"/></svg><div class="abs" style="left:2px;top:135px;width:11px;height:338px;background:#c1c1c1"></div></div>
</div>
<div id="sub">
 <div id="topbar">
  <div class="abs" style="left:12px;top:4.5px;font-size:15px;letter-spacing:0.2px;font-weight:bold;color:#dfdbd2;white-space:nowrap">Activities</div>
  <svg class="abs" style="left:100px;top:4px" width="18" height="20"><rect x="0" y="1" width="17" height="16" fill="#45443f"/><g transform="translate(4.5,3.5) scale(0.82,0.72)" fill="#f7931e"><path d="M10 0 L0 2.9 V5.6 L10 2.7 Z"/><path d="M0 2.8 L10 5.7 V8.4 L0 5.5 Z"/><path d="M10 8.5 L0 11.2 V14 L10 11.1 Z"/></g></svg>
  <div class="abs" style="left:122px;top:4.5px;font-size:15px;letter-spacing:0.1px;font-weight:bold;color:#dfdbd2;white-space:nowrap">Sublime Text</div>
  <svg class="abs" style="left:221px;top:10px" width="12" height="8"><path d="M1 1 H11 L6 7 Z" fill="#dfdbd2"/></svg>
  <div class="abs" style="left:650px;top:4.5px;font-size:15px;font-weight:bold;color:#dfdbd2;white-space:nowrap">mar 12:56</div>
  <svg class="abs" style="left:1150px;top:4px" width="216" height="20">
   <path d="M1 4 L6 1 L10 4 L14 1 L19 4 L15 7.5 L19 11 L14 14 L10 11 L6 14 L1 11 L5 7.5 Z" fill="#e5e1d8"/>
   <path d="M5 13 L10 16.5 L15 13" fill="#e5e1d8"/>
   <text x="46" y="15" font-size="14.6" font-weight="bold" fill="#dfdbd2" font-family="Liberation Sans">es</text>
   <path d="M67 7 H77 L72 12 Z" fill="#dfdbd2"/>
<g transform="translate(9,0)">   <rect x="106" y="2" width="5" height="5" fill="#dfdbd2"/><path d="M108.5 7 V10 M103 13 V10 H114 V13" fill="none" stroke="#dfdbd2" stroke-width="1.3"/>
   <rect x="100.5" y="12" width="5" height="5" fill="#dfdbd2"/><rect x="111.5" y="12" width="5" height="5" fill="#dfdbd2"/></g>
<g transform="translate(8,0)">   <path d="M129 7 H132 L136 3 V15 L132 11 H129 Z" fill="#dfdbd2"/><path d="M138 6 Q140 9 138 12 M140.5 4 Q144 9 140.5 14" fill="none" stroke="#9a9890" stroke-width="1.3"/></g>
<g transform="translate(9,0)">   <rect x="159" y="3" width="11" height="14" rx="1" fill="none" stroke="#dfdbd2" stroke-width="1.4"/><rect x="162" y="1" width="5" height="2" fill="#dfdbd2"/>
   <path d="M161.5 7 H167.5 M161.5 10 H167.5 M161.5 13 H167.5" stroke="#dfdbd2" stroke-width="1.4"/></g>
   <path d="M191 7 H202 L196.5 12 Z" fill="#dfdbd2"/>
  </svg>
 </div>
 <div id="titlebar">
  <div class="abs" style="left:206.5px;top:6px;width:1000px;font-size:14.4px;letter-spacing:0.42px;font-weight:bold;color:#dfdbd2;white-space:nowrap;text-align:left">/tmp/sublime-sftp-browse-1542111432/fing-virtual/opt/fing/difusion/templates/difusion/index.html • - Sublime Text (UNREGISTERED)</div>
  <svg class="abs" style="left:1316px;top:0" width="50" height="28">
   <defs><linearGradient id="wb" x1="0" y1="0" x2="0" y2="1"><stop offset="0" stop-color="#75746f"/><stop offset="1" stop-color="#55544f"/></linearGradient>
   <linearGradient id="wc" x1="0" y1="0" x2="0" y2="1"><stop offset="0" stop-color="#f6774f"/><stop offset="1" stop-color="#e0502a"/></linearGradient></defs>
   <circle cx="13" cy="14" r="8" fill="url(#wb)"/><circle cx="29" cy="14" r="8" fill="url(#wb)"/><circle cx="44.5" cy="14" r="8" fill="url(#wc)"/>
   <path d="M9 14.5 H17" stroke="#3c3b37" stroke-width="1.3"/>
   <rect x="25.5" y="11" width="7" height="6" fill="none" stroke="#3c3b37" stroke-width="1.2"/>
   <path d="M41.5 11 L47.5 17 M47.5 11 L41.5 17" stroke="#3c3b37" stroke-width="1.4"/>
  </svg>
 </div>
 <div id="menubar">
  <div class="abs mi" style="left:7px">File</div><div class="abs mi" style="left:45px">Edit</div><div class="abs mi" style="left:86px">Selection</div>
  <div class="abs mi" style="left:162px">Find</div><div class="abs mi" style="left:205px">View</div><div class="abs mi" style="left:252px">Goto</div>
  <div class="abs mi" style="left:300px">Tools</div><div class="abs mi" style="left:350px">Project</div><div class="abs mi" style="left:413px">Preferences</div>
  <div class="abs mi" style="left:508px">Help</div>
 </div>
 <div id="tabbar"><svg class="abs" style="left:0;top:0" width="1366" height="34">
<defs><linearGradient id="tbg" x1="0" y1="0" x2="0" y2="1"><stop offset="0" stop-color="#71716c"/><stop offset=".17" stop-color="#6e6e69"/><stop offset=".2" stop-color="#6a6a65"/><stop offset="1" stop-color="#646460"/></linearGradient></defs>
<rect x="0" y="0" width="1366" height="34" fill="url(#tbg)"/>
<path d="M1169.1 34 L1181.7 7.5 Q1182.6 5 1184.5 5 H1321.7 Q1323.6 5 1324.5 7.5 L1337.1 34 Z" fill="#42423e"/>
<path d="M1004.8 34 L1017.4 7.5 Q1018.3 5 1020.2 5 H1161.2 Q1163.1 5 1164.0 7.5 L1176.6 34 Z" fill="#42423e"/>
<path d="M841.0 34 L853.6 7.5 Q854.5 5 856.4 5 H997.4 Q999.3 5 1000.2 7.5 L1012.8 34 Z" fill="#42423e"/>
<path d="M681.1 34 L693.7 7.5 Q694.6 5 696.5 5 H833.7 Q835.6 5 836.5 7.5 L849.1 34 Z" fill="#42423e"/>
<path d="M362.5 34 L375.1 7.5 Q376.0 5 377.9 5 H515.1 Q517.0 5 517.9 7.5 L530.5 34 Z" fill="#42423e"/>
<path d="M203.2 34 L215.8 7.5 Q216.7 5 218.6 5 H355.8 Q357.7 5 358.6 7.5 L371.2 34 Z" fill="#42423e"/>
<path d="M43.9 34 L56.5 7.5 Q57.4 5 59.3 5 H196.5 Q198.4 5 199.3 7.5 L211.9 34 Z" fill="#42423e"/>
<path d="M521.8 34 L534.4 7.5 Q535.3 5 537.2 5 H674.4 Q676.3 5 677.2 7.5 L689.8 34 Z" fill="#272822"/>
<path d="M11.3 17 L19 12 V22 Z M25 12 L32.5 17 L25 22 Z" fill="#c9c9c5"/>
<path d="M181.3 16.3 L187.7 22.7 M187.7 16.3 L181.3 22.7" stroke="#9c9c98" stroke-width="1.7"/>
<path d="M340.6 16.3 L347.0 22.7 M347.0 16.3 L340.6 22.7" stroke="#9c9c98" stroke-width="1.7"/>
<path d="M499.9 16.3 L506.3 22.7 M506.3 16.3 L499.9 22.7" stroke="#9c9c98" stroke-width="1.7"/>
<circle cx="662.6" cy="19.5" r="3.7" fill="#aeaeaa"/>
<path d="M818.5 16.3 L824.9 22.7 M824.9 16.3 L818.5 22.7" stroke="#9c9c98" stroke-width="1.7"/>
<path d="M982.2 16.3 L988.6 22.7 M988.6 16.3 L982.2 22.7" stroke="#9c9c98" stroke-width="1.7"/>
<path d="M1146.0 16.3 L1152.4 22.7 M1152.4 16.3 L1146.0 22.7" stroke="#9c9c98" stroke-width="1.7"/>
<path d="M1306.5 16.3 L1312.9 22.7 M1312.9 16.3 L1306.5 22.7" stroke="#9c9c98" stroke-width="1.7"/>
<path d="M1343.5 11 H1354.5 L1349 20.5 Z" fill="#e8e8e4"/>
</svg>
<div class="abs" style="left:66.5px;top:13px;font-size:12.6px;letter-spacing:0.1px;color:#a9a9a3;white-space:nowrap">models.py</div>
<div class="abs" style="left:225.8px;top:13px;font-size:12.6px;letter-spacing:0.1px;color:#a9a9a3;white-space:nowrap">base.html</div>
<div class="abs" style="left:385.1px;top:13px;font-size:12.6px;letter-spacing:0.1px;color:#a9a9a3;white-space:nowrap">admin.py</div>
<div class="abs" style="left:544.4px;top:13px;font-size:12.6px;letter-spacing:0.1px;color:#eeeeea;white-space:nowrap">index.html</div>
<div class="abs" style="left:703.7px;top:13px;font-size:12.6px;letter-spacing:0.1px;color:#a9a9a3;white-space:nowrap">forms.py</div>
<div class="abs" style="left:863.6px;top:13px;font-size:12.6px;letter-spacing:0.1px;color:#a9a9a3;white-space:nowrap">difusion.css</div>
<div class="abs" style="left:1027.4px;top:13px;font-size:12.6px;letter-spacing:0.1px;color:#a9a9a3;white-space:nowrap">noticias.html</div>
<div class="abs" style="left:1191.7px;top:13px;font-size:12.6px;letter-spacing:0.1px;color:#a9a9a3;white-space:nowrap">views.py</div></div>
 <div id="editor"><svg class="abs" style="left:1214px;top:0" width="152" height="606">
<rect x="0" y="0" width="2" height="1.2" fill="#f92672" opacity=".38"/>
<rect x="3" y="0" width="3" height="1.2" fill="#a6e22e" opacity=".38"/>
<rect x="7" y="0" width="7" height="1.2" fill="#e6db74" opacity=".38"/>
<rect x="0" y="2" width="2" height="1.2" fill="#f92672" opacity=".38"/>
<rect x="3" y="2" width="3" height="1.2" fill="#a6e22e" opacity=".38"/>
<rect x="7" y="2" width="5" height="1.2" fill="#e6db74" opacity=".38"/>
<rect x="0" y="4" width="2" height="1.2" fill="#f92672" opacity=".38"/>
<rect x="3" y="4" width="3" height="1.2" fill="#a6e22e" opacity=".38"/>
<rect x="7" y="4" width="3" height="1.2" fill="#e6db74" opacity=".38"/>
<rect x="0" y="6" width="2" height="1.2" fill="#f92672" opacity=".38"/>
<rect x="3" y="6" width="3" height="1.2" fill="#a6e22e" opacity=".38"/>
<rect x="7" y="6" width="91" height="1.2" fill="#e6db74" opacity=".38"/>
<rect x="0" y="8" width="2" height="1.2" fill="#f92672" opacity=".38"/>
<rect x="3" y="8" width="3" height="1.2" fill="#a6e22e" opacity=".38"/>
<rect x="7" y="8" width="3" height="1.2" fill="#e6db74" opacity=".38"/>
<rect x="0" y="10" width="2" height="1.2" fill="#f92672" opacity=".38"/>
<rect x="3" y="10" width="3" height="1.2" fill="#a6e22e" opacity=".38"/>
<rect x="7" y="10" width="3" height="1.2" fill="#e6db74" opacity=".38"/>
<rect x="0" y="12" width="2" height="1.2" fill="#f92672" opacity=".38"/>
<rect x="3" y="12" width="3" height="1.2" fill="#a6e22e" opacity=".38"/>
<rect x="7" y="12" width="5" height="1.2" fill="#e6db74" opacity=".38"/>
<rect x="0" y="14" width="2" height="1.2" fill="#f92672" opacity=".38"/>
<rect x="3" y="14" width="3" height="1.2" fill="#a6e22e" opacity=".38"/>
<rect x="7" y="14" width="5" height="1.2" fill="#e6db74" opacity=".38"/>
<rect x="0" y="16" width="2" height="1.2" fill="#f92672" opacity=".38"/>
<rect x="3" y="16" width="3" height="1.2" fill="#a6e22e" opacity=".38"/>
<rect x="7" y="16" width="5" height="1.2" fill="#e6db74" opacity=".38"/>
<rect x="2" y="18" width="2" height="1.2" fill="#f92672" opacity=".38"/>
<rect x="5" y="18" width="3" height="1.2" fill="#a6e22e" opacity=".38"/>
<rect x="9" y="18" width="25" height="1.2" fill="#e6db74" opacity=".38"/>
<rect x="5" y="20" width="24" height="1.2" fill="#cfcfc8" opacity=".38"/>
<rect x="5" y="22" width="2" height="1.2" fill="#f92672" opacity=".38"/>
<rect x="8" y="22" width="3" height="1.2" fill="#a6e22e" opacity=".38"/>
<rect x="12" y="22" width="11" height="1.2" fill="#e6db74" opacity=".38"/>
<rect x="5" y="24" width="2" height="1.2" fill="#f92672" opacity=".38"/>
<rect x="8" y="24" width="3" height="1.2" fill="#a6e22e" opacity=".38"/>
<rect x="12" y="24" width="19" height="1.2" fill="#e6db74" opacity=".38"/>
<rect x="5" y="26" width="2" height="1.2" fill="#f92672" opacity=".38"/>
<rect x="8" y="26" width="3" height="1.2" fill="#a6e22e" opacity=".38"/>
<rect x="12" y="26" width="5" height="1.2" fill="#e6db74" opacity=".38"/>
<rect x="5" y="28" width="40" height="1.2" fill="#cfcfc8" opacity=".38"/>
<rect x="0" y="32" width="2" height="1.2" fill="#f92672" opacity=".38"/>
<rect x="3" y="32" width="3" height="1.2" fill="#a6e22e" opacity=".38"/>
<rect x="7" y="32" width="19" height="1.2" fill="#e6db74" opacity=".38"/>
<rect x="0" y="34" width="2" height="1.2" fill="#f92672" opacity=".38"/>
<rect x="3" y="34" width="3" height="1.2" fill="#a6e22e" opacity=".38"/>
<rect x="7" y="34" width="35" height="1.2" fill="#e6db74" opacity=".38"/>
<rect x="0" y="36" width="10" height="1.2" fill="#cfcfc8" opacity=".38"/>
<rect x="0" y="38" width="2" height="1.2" fill="#f92672" opacity=".38"/>
<rect x="3" y="38" width="3" height="1.2" fill="#a6e22e" opacity=".38"/>
<rect x="7" y="38" width="35" height="1.2" fill="#e6db74" opacity=".38"/>
<rect x="3" y="40" width="2" height="1.2" fill="#f92672" opacity=".38"/>
<rect x="6" y="40" width="3" height="1.2" fill="#a6e22e" opacity=".38"/>
<rect x="10" y="40" width="3" height="1.2" fill="#e6db74" opacity=".38"/>
<rect x="5" y="42" width="2" height="1.2" fill="#f92672" opacity=".38"/>
<rect x="8" y="42" width="3" height="1.2" fill="#a6e22e" opacity=".38"/>
<rect x="12" y="42" width="73" height="1.2" fill="#e6db74" opacity=".38"/>
<rect x="8" y="44" width="2" height="1.2" fill="#f92672" opacity=".38"/>
<rect x="11" y="44" width="3" height="1.2" fill="#a6e22e" opacity=".38"/>
<rect x="15" y="44" width="25" height="1.2" fill="#e6db74" opacity=".38"/>
<rect x="9" y="46" width="30" height="1.2" fill="#cfcfc8" opacity=".38"/>
<rect x="11" y="48" width="20" height="1.2" fill="#cfcfc8" opacity=".38"/>
<rect x="12" y="50" width="2" height="1.2" fill="#f92672" opacity=".38"/>
<rect x="15" y="50" width="3" height="1.2" fill="#a6e22e" opacity=".38"/>
<rect x="19" y="50" width="25" height="1.2" fill="#e6db74" opacity=".38"/>
<rect x="11" y="52" width="2" height="1.2" fill="#f92672" opacity=".38"/>
<rect x="14" y="52" width="3" height="1.2" fill="#a6e22e" opacity=".38"/>
<rect x="18" y="52" width="11" height="1.2" fill="#e6db74" opacity=".38"/>
<rect x="11" y="54" width="2" height="1.2" fill="#f92672" opacity=".38"/>
<rect x="14" y="54" width="3" height="1.2" fill="#a6e22e" opacity=".38"/>
<rect x="18" y="54" width="7" height="1.2" fill="#e6db74" opacity=".38"/>
<rect x="10" y="56" width="2" height="1.2" fill="#f92672" opacity=".38"/>
<rect x="13" y="56" width="3" height="1.2" fill="#a6e22e" opacity=".38"/>
<rect x="17" y="56" width="19" height="1.2" fill="#e6db74" opacity=".38"/>
<rect x="9" y="58" width="8" height="1.2" fill="#cfcfc8" opacity=".38"/>
<rect x="8" y="60" width="2" height="1.2" fill="#f92672" opacity=".38"/>
<rect x="11" y="60" width="3" height="1.2" fill="#a6e22e" opacity=".38"/>
<rect x="15" y="60" width="25" height="1.2" fill="#e6db74" opacity=".38"/>
<rect x="10" y="62" width="2" height="1.2" fill="#f92672" opacity=".38"/>
<rect x="13" y="62" width="3" height="1.2" fill="#a6e22e" opacity=".38"/>
<rect x="17" y="62" width="25" height="1.2" fill="#e6db74" opacity=".38"/>
<rect x="12" y="64" width="2" height="1.2" fill="#f92672" opacity=".38"/>
<rect x="15" y="64" width="3" height="1.2" fill="#a6e22e" opacity=".38"/>
<rect x="19" y="64" width="7" height="1.2" fill="#e6db74" opacity=".38"/>
<rect x="17" y="68" width="2" height="1.2" fill="#f92672" opacity=".38"/>
<rect x="20" y="68" width="3" height="1.2" fill="#a6e22e" opacity=".38"/>
<rect x="24" y="68" width="5" height="1.2" fill="#e6db74" opacity=".38"/>
<rect x="21" y="72" width="2" height="1.2" fill="#f92672" opacity=".38"/>
<rect x="24" y="72" width="3" height="1.2" fill="#a6e22e" opacity=".38"/>
<rect x="28" y="72" width="25" height="1.2" fill="#e6db74" opacity=".38"/>
<rect x="23" y="74" width="2" height="1.2" fill="#f92672" opacity=".38"/>
<rect x="26" y="74" width="3" height="1.2" fill="#a6e22e" opacity=".38"/>
<rect x="30" y="74" width="19" height="1.2" fill="#e6db74" opacity=".38"/>
<rect x="25" y="76" width="2" height="1.2" fill="#f92672" opacity=".38"/>
<rect x="28" y="76" width="3" height="1.2" fill="#a6e22e" opacity=".38"/>
<rect x="32" y="76" width="35" height="1.2" fill="#e6db74" opacity=".38"/>
<rect x="28" y="78" width="2" height="1.2" fill="#f92672" opacity=".38"/>
<rect x="31" y="78" width="3" height="1.2" fill="#a6e22e" opacity=".38"/>
<rect x="35" y="78" width="19" height="1.2" fill="#e6db74" opacity=".38"/>
<rect x="30" y="80" width="8" height="1.2" fill="#cfcfc8" opacity=".38"/>
<rect x="32" y="82" width="2" height="1.2" fill="#f92672" opacity=".38"/>
<rect x="35" y="82" width="3" height="1.2" fill="#a6e22e" opacity=".38"/>
<rect x="39" y="82" width="3" height="1.2" fill="#e6db74" opacity=".38"/>
<rect x="34" y="84" width="2" height="1.2" fill="#f92672" opacity=".38"/>
<rect x="37" y="84" width="3" height="1.2" fill="#a6e22e" opacity=".38"/>
<rect x="41" y="84" width="5" height="1.2" fill="#e6db74" opacity=".38"/>
<rect x="34" y="86" width="2" height="1.2" fill="#f92672" opacity=".38"/>
<rect x="37" y="86" width="3" height="1.2" fill="#a6e22e" opacity=".38"/>
<rect x="41" y="86" width="7" height="1.2" fill="#e6db74" opacity=".38"/>
<rect x="34" y="88" width="2" height="1.2" fill="#f92672" opacity=".38"/>
<rect x="37" y="88" width="3" height="1.2" fill="#a6e22e" opacity=".38"/>
<rect x="41" y="88" width="19" height="1.2" fill="#e6db74" opacity=".38"/>
<rect x="33" y="90" width="16" height="1.2" fill="#cfcfc8" opacity=".38"/>
<rect x="33" y="92" width="2" height="1.2" fill="#f92672" opacity=".38"/>
<rect x="36" y="92" width="3" height="1.2" fill="#a6e22e" opacity=".38"/>
<rect x="40" y="92" width="11" height="1.2" fill="#e6db74" opacity=".38"/>
<rect x="33" y="94" width="2" height="1.2" fill="#f92672" opacity=".38"/>
<rect x="36" y="94" width="3" height="1.2" fill="#a6e22e" opacity=".38"/>
<rect x="40" y="94" width="3" height="1.2" fill="#e6db74" opacity=".38"/>
<rect x="33" y="96" width="24" height="1.2" fill="#cfcfc8" opacity=".38"/>
<rect x="33" y="98" width="2" height="1.2" fill="#f92672" opacity=".38"/>
<rect x="36" y="98" width="3" height="1.2" fill="#a6e22e" opacity=".38"/>
<rect x="40" y="98" width="19" height="1.2" fill="#e6db74" opacity=".38"/>
<rect x="32" y="100" width="2" height="1.2" fill="#f92672" opacity=".38"/>
<rect x="35" y="100" width="3" height="1.2" fill="#a6e22e" opacity=".38"/>
<rect x="39" y="100" width="19" height="1.2" fill="#e6db74" opacity=".38"/>
<rect x="32" y="102" width="2" height="1.2" fill="#f92672" opacity=".38"/>
<rect x="35" y="102" width="3" height="1.2" fill="#a6e22e" opacity=".38"/>
<rect x="39" y="102" width="3" height="1.2" fill="#e6db74" opacity=".38"/>
<rect x="30" y="104" width="2" height="1.2" fill="#f92672" opacity=".38"/>
<rect x="33" y="104" width="3" height="1.2" fill="#a6e22e" opacity=".38"/>
<rect x="37" y="104" width="5" height="1.2" fill="#e6db74" opacity=".38"/>
<rect x="25" y="106" width="2" height="1.2" fill="#f92672" opacity=".38"/>
<rect x="28" y="106" width="3" height="1.2" fill="#a6e22e" opacity=".38"/>
<rect x="32" y="106" width="11" height="1.2" fill="#e6db74" opacity=".38"/>
<rect x="21" y="108" width="24" height="1.2" fill="#cfcfc8" opacity=".38"/>
<rect x="17" y="110" width="40" height="1.2" fill="#cfcfc8" opacity=".38"/>
<rect x="12" y="112" width="2" height="1.2" fill="#f92672" opacity=".38"/>
<rect x="15" y="112" width="3" height="1.2" fill="#a6e22e" opacity=".38"/>
<rect x="19" y="112" width="7" height="1.2" fill="#e6db74" opacity=".38"/>
<rect x="8" y="114" width="2" height="1.2" fill="#f92672" opacity=".38"/>
<rect x="11" y="114" width="3" height="1.2" fill="#a6e22e" opacity=".38"/>
<rect x="15" y="114" width="35" height="1.2" fill="#e6db74" opacity=".38"/>
<rect x="2" y="116" width="2" height="1.2" fill="#f92672" opacity=".38"/>
<rect x="5" y="116" width="3" height="1.2" fill="#a6e22e" opacity=".38"/>
<rect x="9" y="116" width="35" height="1.2" fill="#e6db74" opacity=".38"/>
<rect x="1" y="118" width="2" height="1.2" fill="#f92672" opacity=".38"/>
<rect x="4" y="118" width="3" height="1.2" fill="#a6e22e" opacity=".38"/>
<rect x="8" y="118" width="101" height="1.2" fill="#e6db74" opacity=".38"/>
<rect x="3" y="120" width="12" height="1.2" fill="#cfcfc8" opacity=".38"/>
<rect x="6" y="122" width="2" height="1.2" fill="#f92672" opacity=".38"/>
<rect x="9" y="122" width="3" height="1.2" fill="#a6e22e" opacity=".38"/>
<rect x="13" y="122" width="68" height="1.2" fill="#e6db74" opacity=".38"/>
<rect x="8" y="124" width="2" height="1.2" fill="#f92672" opacity=".38"/>
<rect x="11" y="124" width="3" height="1.2" fill="#a6e22e" opacity=".38"/>
<rect x="15" y="124" width="19" height="1.2" fill="#e6db74" opacity=".38"/>
<rect x="9" y="126" width="2" height="1.2" fill="#f92672" opacity=".38"/>
<rect x="12" y="126" width="3" height="1.2" fill="#a6e22e" opacity=".38"/>
<rect x="16" y="126" width="19" height="1.2" fill="#e6db74" opacity=".38"/>
<rect x="11" y="128" width="30" height="1.2" fill="#cfcfc8" opacity=".38"/>
<rect x="12" y="130" width="2" height="1.2" fill="#f92672" opacity=".38"/>
<rect x="15" y="130" width="3" height="1.2" fill="#a6e22e" opacity=".38"/>
<rect x="19" y="130" width="7" height="1.2" fill="#e6db74" opacity=".38"/>
<rect x="13" y="132" width="12" height="1.2" fill="#cfcfc8" opacity=".38"/>
<rect x="14" y="134" width="12" height="1.2" fill="#cfcfc8" opacity=".38"/>
<rect x="16" y="136" width="2" height="1.2" fill="#f92672" opacity=".38"/>
<rect x="19" y="136" width="3" height="1.2" fill="#a6e22e" opacity=".38"/>
<rect x="23" y="136" width="19" height="1.2" fill="#e6db74" opacity=".38"/>
<rect x="17" y="138" width="2" height="1.2" fill="#f92672" opacity=".38"/>
<rect x="20" y="138" width="3" height="1.2" fill="#a6e22e" opacity=".38"/>
<rect x="24" y="138" width="5" height="1.2" fill="#e6db74" opacity=".38"/>
<rect x="18" y="140" width="2" height="1.2" fill="#f92672" opacity=".38"/>
<rect x="21" y="140" width="3" height="1.2" fill="#a6e22e" opacity=".38"/>
<rect x="25" y="140" width="3" height="1.2" fill="#e6db74" opacity=".38"/>
<rect x="20" y="142" width="2" height="1.2" fill="#f92672" opacity=".38"/>
<rect x="23" y="142" width="3" height="1.2" fill="#a6e22e" opacity=".38"/>
<rect x="27" y="142" width="5" height="1.2" fill="#e6db74" opacity=".38"/>
<rect x="21" y="144" width="2" height="1.2" fill="#f92672" opacity=".38"/>
<rect x="24" y="144" width="3" height="1.2" fill="#a6e22e" opacity=".38"/>
<rect x="28" y="144" width="11" height="1.2" fill="#e6db74" opacity=".38"/>
<rect x="22" y="146" width="2" height="1.2" fill="#f92672" opacity=".38"/>
<rect x="25" y="146" width="3" height="1.2" fill="#a6e22e" opacity=".38"/>
<rect x="29" y="146" width="35" height="1.2" fill="#e6db74" opacity=".38"/>
<rect x="24" y="148" width="20" height="1.2" fill="#cfcfc8" opacity=".38"/>
<rect x="25" y="150" width="2" height="1.2" fill="#f92672" opacity=".38"/>
<rect x="28" y="150" width="3" height="1.2" fill="#a6e22e" opacity=".38"/>
<rect x="32" y="150" width="35" height="1.2" fill="#e6db74" opacity=".38"/>
<rect x="26" y="152" width="2" height="1.2" fill="#f92672" opacity=".38"/>
<rect x="29" y="152" width="3" height="1.2" fill="#a6e22e" opacity=".38"/>
<rect x="33" y="152" width="5" height="1.2" fill="#e6db74" opacity=".38"/>
<rect x="27" y="154" width="20" height="1.2" fill="#cfcfc8" opacity=".38"/>
<rect x="29" y="156" width="24" height="1.2" fill="#cfcfc8" opacity=".38"/>
<rect x="30" y="158" width="2" height="1.2" fill="#f92672" opacity=".38"/>
<rect x="33" y="158" width="3" height="1.2" fill="#a6e22e" opacity=".38"/>
<rect x="37" y="158" width="11" height="1.2" fill="#e6db74" opacity=".38"/>
<rect x="29" y="160" width="12" height="1.2" fill="#cfcfc8" opacity=".38"/>
<rect x="27" y="162" width="2" height="1.2" fill="#f92672" opacity=".38"/>
<rect x="30" y="162" width="3" height="1.2" fill="#a6e22e" opacity=".38"/>
<rect x="34" y="162" width="25" height="1.2" fill="#e6db74" opacity=".38"/>
<rect x="26" y="164" width="24" height="1.2" fill="#cfcfc8" opacity=".38"/>
<rect x="23" y="168" width="2" height="1.2" fill="#f92672" opacity=".38"/>
<rect x="26" y="168" width="3" height="1.2" fill="#a6e22e" opacity=".38"/>
<rect x="30" y="168" width="35" height="1.2" fill="#e6db74" opacity=".38"/>
<rect x="22" y="170" width="2" height="1.2" fill="#f92672" opacity=".38"/>
<rect x="25" y="170" width="3" height="1.2" fill="#a6e22e" opacity=".38"/>
<rect x="29" y="170" width="15" height="1.2" fill="#e6db74" opacity=".38"/>
<rect x="20" y="172" width="2" height="1.2" fill="#f92672" opacity=".38"/>
<rect x="23" y="172" width="3" height="1.2" fill="#a6e22e" opacity=".38"/>
<rect x="27" y="172" width="11" height="1.2" fill="#e6db74" opacity=".38"/>
<rect x="19" y="174" width="2" height="1.2" fill="#f92672" opacity=".38"/>
<rect x="22" y="174" width="3" height="1.2" fill="#a6e22e" opacity=".38"/>
<rect x="26" y="174" width="3" height="1.2" fill="#e6db74" opacity=".38"/>
<rect x="17" y="176" width="2" height="1.2" fill="#f92672" opacity=".38"/>
<rect x="20" y="176" width="3" height="1.2" fill="#a6e22e" opacity=".38"/>
<rect x="24" y="176" width="25" height="1.2" fill="#e6db74" opacity=".38"/>
<rect x="16" y="178" width="30" height="1.2" fill="#cfcfc8" opacity=".38"/>
<rect x="18" y="180" width="2" height="1.2" fill="#f92672" opacity=".38"/>
<rect x="21" y="180" width="3" height="1.2" fill="#a6e22e" opacity=".38"/>
<rect x="25" y="180" width="19" height="1.2" fill="#e6db74" opacity=".38"/>
<rect x="21" y="182" width="2" height="1.2" fill="#f92672" opacity=".38"/>
<rect x="24" y="182" width="3" height="1.2" fill="#a6e22e" opacity=".38"/>
<rect x="28" y="182" width="25" height="1.2" fill="#e6db74" opacity=".38"/>
<rect x="28" y="188" width="16" height="1.2" fill="#cfcfc8" opacity=".38"/>
<rect x="28" y="190" width="2" height="1.2" fill="#f92672" opacity=".38"/>
<rect x="31" y="190" width="3" height="1.2" fill="#a6e22e" opacity=".38"/>
<rect x="35" y="190" width="19" height="1.2" fill="#e6db74" opacity=".38"/>
<rect x="28" y="192" width="2" height="1.2" fill="#f92672" opacity=".38"/>
<rect x="31" y="192" width="3" height="1.2" fill="#a6e22e" opacity=".38"/>
<rect x="35" y="192" width="77" height="1.2" fill="#e6db74" opacity=".38"/>
<rect x="28" y="196" width="8" height="1.2" fill="#cfcfc8" opacity=".38"/>
<rect x="28" y="198" width="2" height="1.2" fill="#f92672" opacity=".38"/>
<rect x="31" y="198" width="3" height="1.2" fill="#a6e22e" opacity=".38"/>
<rect x="35" y="198" width="11" height="1.2" fill="#e6db74" opacity=".38"/>
<rect x="29" y="200" width="24" height="1.2" fill="#cfcfc8" opacity=".38"/>
<rect x="29" y="206" width="2" height="1.2" fill="#f92672" opacity=".38"/>
<rect x="32" y="206" width="3" height="1.2" fill="#a6e22e" opacity=".38"/>
<rect x="36" y="206" width="11" height="1.2" fill="#e6db74" opacity=".38"/>
<rect x="29" y="208" width="2" height="1.2" fill="#f92672" opacity=".38"/>
<rect x="32" y="208" width="3" height="1.2" fill="#a6e22e" opacity=".38"/>
<rect x="36" y="208" width="25" height="1.2" fill="#e6db74" opacity=".38"/>
<rect x="29" y="210" width="20" height="1.2" fill="#cfcfc8" opacity=".38"/>
<rect x="29" y="212" width="2" height="1.2" fill="#f92672" opacity=".38"/>
<rect x="32" y="212" width="3" height="1.2" fill="#a6e22e" opacity=".38"/>
<rect x="36" y="212" width="7" height="1.2" fill="#e6db74" opacity=".38"/>
<rect x="29" y="216" width="10" height="1.2" fill="#cfcfc8" opacity=".38"/>
<rect x="30" y="218" width="8" height="1.2" fill="#cfcfc8" opacity=".38"/>
<rect x="30" y="220" width="2" height="1.2" fill="#f92672" opacity=".38"/>
<rect x="33" y="220" width="3" height="1.2" fill="#a6e22e" opacity=".38"/>
<rect x="37" y="220" width="15" height="1.2" fill="#e6db74" opacity=".38"/>
<rect x="30" y="224" width="2" height="1.2" fill="#f92672" opacity=".38"/>
<rect x="33" y="224" width="3" height="1.2" fill="#a6e22e" opacity=".38"/>
<rect x="37" y="224" width="15" height="1.2" fill="#e6db74" opacity=".38"/>
<rect x="30" y="226" width="24" height="1.2" fill="#cfcfc8" opacity=".38"/>
<rect x="30" y="228" width="2" height="1.2" fill="#f92672" opacity=".38"/>
<rect x="33" y="228" width="3" height="1.2" fill="#a6e22e" opacity=".38"/>
<rect x="37" y="228" width="19" height="1.2" fill="#e6db74" opacity=".38"/>
<rect x="24" y="232" width="16" height="1.2" fill="#cfcfc8" opacity=".38"/>
<rect x="19" y="236" width="2" height="1.2" fill="#f92672" opacity=".38"/>
<rect x="22" y="236" width="3" height="1.2" fill="#a6e22e" opacity=".38"/>
<rect x="26" y="236" width="7" height="1.2" fill="#e6db74" opacity=".38"/>
<rect x="13" y="240" width="16" height="1.2" fill="#cfcfc8" opacity=".38"/>
<rect x="10" y="242" width="12" height="1.2" fill="#cfcfc8" opacity=".38"/>
<rect x="7" y="244" width="30" height="1.2" fill="#cfcfc8" opacity=".38"/>
<rect x="4" y="246" width="2" height="1.2" fill="#f92672" opacity=".38"/>
<rect x="7" y="246" width="3" height="1.2" fill="#a6e22e" opacity=".38"/>
<rect x="11" y="246" width="15" height="1.2" fill="#e6db74" opacity=".38"/>
<rect x="1" y="250" width="30" height="1.2" fill="#cfcfc8" opacity=".38"/>
<rect x="2" y="252" width="2" height="1.2" fill="#f92672" opacity=".38"/>
<rect x="5" y="252" width="3" height="1.2" fill="#a6e22e" opacity=".38"/>
<rect x="9" y="252" width="3" height="1.2" fill="#e6db74" opacity=".38"/>
<rect x="3" y="254" width="2" height="1.2" fill="#f92672" opacity=".38"/>
<rect x="6" y="254" width="3" height="1.2" fill="#a6e22e" opacity=".38"/>
<rect x="10" y="254" width="11" height="1.2" fill="#e6db74" opacity=".38"/>
<rect x="4" y="256" width="2" height="1.2" fill="#f92672" opacity=".38"/>
<rect x="7" y="256" width="3" height="1.2" fill="#a6e22e" opacity=".38"/>
<rect x="11" y="256" width="5" height="1.2" fill="#e6db74" opacity=".38"/>
<rect x="8" y="262" width="2" height="1.2" fill="#f92672" opacity=".38"/>
<rect x="11" y="262" width="3" height="1.2" fill="#a6e22e" opacity=".38"/>
<rect x="15" y="262" width="11" height="1.2" fill="#e6db74" opacity=".38"/>
<rect x="10" y="264" width="2" height="1.2" fill="#f92672" opacity=".38"/>
<rect x="13" y="264" width="3" height="1.2" fill="#a6e22e" opacity=".38"/>
<rect x="17" y="264" width="5" height="1.2" fill="#e6db74" opacity=".38"/>
<rect x="12" y="266" width="20" height="1.2" fill="#cfcfc8" opacity=".38"/>
<rect x="13" y="268" width="2" height="1.2" fill="#f92672" opacity=".38"/>
<rect x="16" y="268" width="3" height="1.2" fill="#a6e22e" opacity=".38"/>
<rect x="20" y="268" width="11" height="1.2" fill="#e6db74" opacity=".38"/>
<rect x="15" y="270" width="30" height="1.2" fill="#cfcfc8" opacity=".38"/>
<rect x="17" y="272" width="2" height="1.2" fill="#f92672" opacity=".38"/>
<rect x="20" y="272" width="3" height="1.2" fill="#a6e22e" opacity=".38"/>
<rect x="24" y="272" width="3" height="1.2" fill="#e6db74" opacity=".38"/>
<rect x="20" y="276" width="2" height="1.2" fill="#f92672" opacity=".38"/>
<rect x="23" y="276" width="3" height="1.2" fill="#a6e22e" opacity=".38"/>
<rect x="27" y="276" width="15" height="1.2" fill="#e6db74" opacity=".38"/>
<rect x="22" y="278" width="2" height="1.2" fill="#f92672" opacity=".38"/>
<rect x="25" y="278" width="3" height="1.2" fill="#a6e22e" opacity=".38"/>
<rect x="29" y="278" width="56" height="1.2" fill="#e6db74" opacity=".38"/>
<rect x="23" y="280" width="2" height="1.2" fill="#f92672" opacity=".38"/>
<rect x="26" y="280" width="3" height="1.2" fill="#a6e22e" opacity=".38"/>
<rect x="30" y="280" width="5" height="1.2" fill="#e6db74" opacity=".38"/>
<rect x="25" y="282" width="2" height="1.2" fill="#f92672" opacity=".38"/>
<rect x="28" y="282" width="3" height="1.2" fill="#a6e22e" opacity=".38"/>
<rect x="32" y="282" width="15" height="1.2" fill="#e6db74" opacity=".38"/>
<rect x="28" y="286" width="2" height="1.2" fill="#f92672" opacity=".38"/>
<rect x="31" y="286" width="3" height="1.2" fill="#a6e22e" opacity=".38"/>
<rect x="35" y="286" width="11" height="1.2" fill="#e6db74" opacity=".38"/>
<rect x="21" y="288" width="20" height="1.2" fill="#cfcfc8" opacity=".38"/>
<rect x="14" y="290" width="2" height="1.2" fill="#f92672" opacity=".38"/>
<rect x="17" y="290" width="3" height="1.2" fill="#a6e22e" opacity=".38"/>
<rect x="21" y="290" width="35" height="1.2" fill="#e6db74" opacity=".38"/>
<rect x="7" y="292" width="2" height="1.2" fill="#f92672" opacity=".38"/>
<rect x="10" y="292" width="3" height="1.2" fill="#a6e22e" opacity=".38"/>
<rect x="14" y="292" width="11" height="1.2" fill="#e6db74" opacity=".38"/>
<rect x="5" y="294" width="2" height="1.2" fill="#f92672" opacity=".38"/>
<rect x="8" y="294" width="3" height="1.2" fill="#a6e22e" opacity=".38"/>
<rect x="12" y="294" width="15" height="1.2" fill="#e6db74" opacity=".38"/>
<rect x="7" y="296" width="20" height="1.2" fill="#cfcfc8" opacity=".38"/>
<rect x="10" y="298" width="2" height="1.2" fill="#f92672" opacity=".38"/>
<rect x="13" y="298" width="3" height="1.2" fill="#a6e22e" opacity=".38"/>
<rect x="17" y="298" width="35" height="1.2" fill="#e6db74" opacity=".38"/>
<rect x="12" y="300" width="40" height="1.2" fill="#cfcfc8" opacity=".38"/>
<rect x="13" y="302" width="30" height="1.2" fill="#cfcfc8" opacity=".38"/>
<rect x="16" y="306" width="30" height="1.2" fill="#cfcfc8" opacity=".38"/>
<rect x="17" y="308" width="2" height="1.2" fill="#f92672" opacity=".38"/>
<rect x="20" y="308" width="3" height="1.2" fill="#a6e22e" opacity=".38"/>
<rect x="24" y="308" width="15" height="1.2" fill="#e6db74" opacity=".38"/>
<rect x="19" y="310" width="2" height="1.2" fill="#f92672" opacity=".38"/>
<rect x="22" y="310" width="3" height="1.2" fill="#a6e22e" opacity=".38"/>
<rect x="26" y="310" width="5" height="1.2" fill="#e6db74" opacity=".38"/>
<rect x="20" y="312" width="2" height="1.2" fill="#f92672" opacity=".38"/>
<rect x="23" y="312" width="3" height="1.2" fill="#a6e22e" opacity=".38"/>
<rect x="27" y="312" width="3" height="1.2" fill="#e6db74" opacity=".38"/>
<rect x="21" y="314" width="2" height="1.2" fill="#f92672" opacity=".38"/>
<rect x="24" y="314" width="3" height="1.2" fill="#a6e22e" opacity=".38"/>
<rect x="28" y="314" width="7" height="1.2" fill="#e6db74" opacity=".38"/>
<rect x="23" y="316" width="16" height="1.2" fill="#cfcfc8" opacity=".38"/>
<rect x="24" y="318" width="2" height="1.2" fill="#f92672" opacity=".38"/>
<rect x="27" y="318" width="3" height="1.2" fill="#a6e22e" opacity=".38"/>
<rect x="31" y="318" width="3" height="1.2" fill="#e6db74" opacity=".38"/>
<rect x="25" y="320" width="2" height="1.2" fill="#f92672" opacity=".38"/>
<rect x="28" y="320" width="3" height="1.2" fill="#a6e22e" opacity=".38"/>
<rect x="32" y="320" width="11" height="1.2" fill="#e6db74" opacity=".38"/>
<rect x="27" y="322" width="2" height="1.2" fill="#f92672" opacity=".38"/>
<rect x="30" y="322" width="3" height="1.2" fill="#a6e22e" opacity=".38"/>
<rect x="34" y="322" width="35" height="1.2" fill="#e6db74" opacity=".38"/>
<rect x="28" y="324" width="2" height="1.2" fill="#f92672" opacity=".38"/>
<rect x="31" y="324" width="3" height="1.2" fill="#a6e22e" opacity=".38"/>
<rect x="35" y="324" width="72" height="1.2" fill="#e6db74" opacity=".38"/>
<rect x="29" y="326" width="2" height="1.2" fill="#f92672" opacity=".38"/>
<rect x="32" y="326" width="3" height="1.2" fill="#a6e22e" opacity=".38"/>
<rect x="36" y="326" width="19" height="1.2" fill="#e6db74" opacity=".38"/>
<rect x="31" y="328" width="2" height="1.2" fill="#f92672" opacity=".38"/>
<rect x="34" y="328" width="3" height="1.2" fill="#a6e22e" opacity=".38"/>
<rect x="38" y="328" width="15" height="1.2" fill="#e6db74" opacity=".38"/>
<rect x="32" y="330" width="2" height="1.2" fill="#f92672" opacity=".38"/>
<rect x="35" y="330" width="3" height="1.2" fill="#a6e22e" opacity=".38"/>
<rect x="39" y="330" width="25" height="1.2" fill="#e6db74" opacity=".38"/>
<rect x="31" y="334" width="2" height="1.2" fill="#f92672" opacity=".38"/>
<rect x="34" y="334" width="3" height="1.2" fill="#a6e22e" opacity=".38"/>
<rect x="38" y="334" width="35" height="1.2" fill="#e6db74" opacity=".38"/>
<rect x="25" y="336" width="2" height="1.2" fill="#f92672" opacity=".38"/>
<rect x="28" y="336" width="3" height="1.2" fill="#a6e22e" opacity=".38"/>
<rect x="32" y="336" width="35" height="1.2" fill="#e6db74" opacity=".38"/>
<rect x="19" y="338" width="2" height="1.2" fill="#f92672" opacity=".38"/>
<rect x="22" y="338" width="3" height="1.2" fill="#a6e22e" opacity=".38"/>
<rect x="26" y="338" width="7" height="1.2" fill="#e6db74" opacity=".38"/>
<rect x="12" y="340" width="2" height="1.2" fill="#f92672" opacity=".38"/>
<rect x="15" y="340" width="3" height="1.2" fill="#a6e22e" opacity=".38"/>
<rect x="19" y="340" width="15" height="1.2" fill="#e6db74" opacity=".38"/>
<rect x="141.5" y="4" width="6.5" height="602" rx="3" fill="#2f302b"/>
<rect x="141.5" y="216" width="6.5" height="103" rx="3" fill="#4a4b45"/>
</svg></div>
 <div id="status">
  <div class="abs" style="left:0;top:0;width:1366px;height:1px;background:#bfc4cb"></div>
  <svg class="abs" style="left:11px;top:4px" width="18" height="14"><rect x="1" y="1" width="15.5" height="11.5" rx="1.5" fill="#d9dce0" stroke="#5b5f66" stroke-width="1.2"/><rect x="1.5" y="9" width="14.5" height="3.5" fill="#6b6f76"/></svg>
  <div class="abs" style="left:40.4px;top:3px;font-size:12px;letter-spacing:0.3px;color:#393d45;white-space:nowrap">Line 88, Column 39</div>
  <div class="abs" style="left:1180px;top:3px;font-size:12px;letter-spacing:0.3px;color:#393d45;white-space:nowrap">Spaces: 4</div>
  <div class="abs" style="left:1293px;top:3px;font-size:12px;letter-spacing:0.3px;color:#393d45;white-space:nowrap">HTML</div>
 </div>
 <div id="dock">
  <svg class="abs" style="left:540px;top:0" width="290" height="29">
   <!-- firefox -->
   <defs><radialGradient id="ffg" cx="0.3" cy="0.8" r="0.9"><stop offset="0" stop-color="#ffd63a"/><stop offset=".45" stop-color="#ff7b17"/><stop offset="1" stop-color="#e8304d"/></radialGradient></defs>
   <circle cx="23" cy="14" r="10.5" fill="url(#ffg)"/>
   <circle cx="24.5" cy="12.5" r="6.2" fill="#3d49c4"/>
   <path d="M16 9 Q21 3 29 6 Q34 10 33.5 15 Q31 8 24 9 Q19 10 18 14 Z" fill="#ffb028"/>
   <path d="M15 15 Q17 22 24 21 Q28 20 30 16 Q27 24 19 23 Q14 20 15 15 Z" fill="#ff6a1a"/>
   <g transform="translate(-6.5,0)">
   <!-- virtualbox -->
   <path d="M50 5 L60 1 L70 5 V19 L60 25 L50 19 Z" fill="#c8d4e4"/><path d="M52 7 L60 4 L68 7 V18 L60 22 L52 18 Z" fill="#23477a"/><path d="M60 4 V22 M52 12 L68 12" stroke="#c8d4e4" stroke-width="1.2"/>
   <!-- files -->
   <rect x="80" y="2" width="20" height="22" rx="1.5" fill="#a8a8a6"/><rect x="81" y="2" width="18" height="9" fill="#e8e8e6"/><rect x="82" y="5" width="16" height="5" fill="#f0a040"/><rect x="86" y="15" width="8" height="3" rx="1" fill="#f4f4f4"/>
   <!-- chrome -->
   <circle cx="119.5" cy="13.5" r="11" fill="#db4437"/>
   <path d="M119.5 13.5 L110 19 A11 11 0 0 0 125 23 Z" fill="#0f9d58"/>
   <path d="M119.5 13.5 L125 23 A11 11 0 0 0 130.5 13 Z" fill="#ffcd40"/>
   <circle cx="119.5" cy="13.5" r="4.8" fill="#fff"/><circle cx="119.5" cy="13.5" r="3.8" fill="#4285f4"/>
   <!-- vscode -->
   <rect x="140" y="3" width="20" height="20" fill="#262a30"/><path d="M154 3 L160 6 V21 L154 23 Z" fill="#2e8ad8"/><path d="M143 9 L154 17 M143 16 L154 8" stroke="#3a9de0" stroke-width="2"/>
   <!-- teamviewer -->
   <rect x="167" y="1" width="24" height="24" rx="2" fill="#0e7dd8"/><circle cx="179" cy="13" r="9.5" fill="#fff"/>
   <path d="M172 13 L175.5 9.5 V11.8 H182.5 V9.5 L186 13 L182.5 16.5 V14.2 H175.5 V16.5 Z" fill="#0e7dd8"/>
   <!-- sublime -->
   <rect x="197" y="1" width="24" height="24" rx="1" fill="#3f3f3d"/>
   <g transform="translate(203.5,4.8)" fill="#f7931e"><path d="M12 0 L0 3.45 V6.7 L12 3.25 Z"/><path d="M0 3.4 L12 6.8 V10 L0 6.6 Z"/><path d="M12 10.1 L0 13.4 V16.7 L12 13.3 Z"/></g>
   <!-- remmina-like -->
   <rect x="229" y="2" width="20" height="21" rx="3.5" fill="#23a3e8"/><rect x="232" y="5" width="14" height="15" rx="1" fill="none" stroke="#fff" stroke-width="1.8"/><rect x="235.5" y="9" width="7" height="7" fill="#fff"/>
   <!-- terminal -->
   <rect x="257" y="3" width="23" height="19" fill="#2a2a2a" stroke="#bdbdbd" stroke-width="1.2"/><path d="M260.5 7.5 L264 10 L260.5 12.5" fill="none" stroke="#eee" stroke-width="1.3"/><rect x="265" y="12" width="4" height="1.3" fill="#eee"/>
   <circle cx="119.5" cy="28" r="1" fill="#e06a20"/><circle cx="209" cy="28" r="1" fill="#e06a20"/><circle cx="268" cy="28" r="1" fill="#e06a20"/>
   </g>
  </svg>
 </div>
</div>
<div id="codelayer" style="position:absolute;left:0;top:0;width:2732px;height:768px;overflow:hidden;clip-path:inset(112px 0 50px 1366px)">
<div class="g" style="left:1425.6px;top:112.0px;height:607.0px"></div>
<div class="g" style="left:1457.6px;top:112.0px;height:607.0px"></div>
<div class="g" style="left:1489.6px;top:112.0px;height:607.0px"></div>
<div class="g" style="left:1521.6px;top:112.0px;height:607.0px"></div>
<div class="g" style="left:1553.6px;top:112.0px;height:250.0px"></div>
<div class="g" style="left:1553.6px;top:396.0px;height:323.0px"></div>
<div class="g" style="left:1585.6px;top:112.0px;height:216.0px"></div>
<div class="g" style="left:1585.6px;top:413.0px;height:153.0px"></div>
<div class="g" style="left:1585.6px;top:617.0px;height:102.0px"></div>
<div class="g" style="left:1617.6px;top:112.0px;height:199.0px"></div>
<div class="g" style="left:1617.6px;top:430.0px;height:17.0px"></div>
<div class="g" style="left:1617.6px;top:481.0px;height:68.0px"></div>
<div class="g" style="left:1617.6px;top:634.0px;height:85.0px"></div>
<div class="g" style="left:1649.6px;top:124.0px;height:102.0px"></div>
<div class="g" style="left:1649.6px;top:260.0px;height:34.0px"></div>
<div class="g" style="left:1649.6px;top:515.0px;height:17.0px"></div>
<div class="g" style="left:1649.6px;top:651.0px;height:68.0px"></div>
<div class="g" style="left:1681.6px;top:141.0px;height:17.0px"></div>
<div class="g" style="left:1681.6px;top:192.0px;height:17.0px"></div>
<div class="g" style="left:1681.6px;top:668.0px;height:17.0px"></div>
<div class="ln" style="top:107.0px">70</div>
<div class="cl" style="top:107.0px;left:1649.6px">&lt;<span class="t">div</span> <span class="a">class</span>=<span class="s">&quot;descripcion align-items-center&quot;</span>&gt;</div>
<div class="ln" style="top:124.0px">71</div>
<div class="cl" style="top:124.0px;left:1681.6px">&lt;<span class="t">div</span> <span class="a">class</span>=<span class="s">&quot;noticia-fecha&quot;</span>&gt;</div>
<div class="ln" style="top:141.0px">72</div>
<div class="cl" style="top:141.0px;left:1713.6px">{{d.fecha}}</div>
<div class="ln" style="top:158.0px">73</div>
<div class="cl" style="top:158.0px;left:1681.6px">&lt;/<span class="t">div</span>&gt;</div>
<div class="ln" style="top:175.0px">74</div>
<div class="cl" style="top:175.0px;left:1681.6px">&lt;<span class="t">div</span> <span class="a">class</span>=<span class="s">&quot;noticia-titulo&quot;</span>&gt;</div>
<div class="ln" style="top:192.0px">75</div>
<div class="cl" style="top:192.0px;left:1713.6px">{{d.titulo|safe}}</div>
<div class="ln" style="top:209.0px">76</div>
<div class="cl" style="top:209.0px;left:1681.6px">&lt;/<span class="t">div</span>&gt;</div>
<div class="ln" style="top:226.0px">77</div>
<div class="cl" style="top:226.0px;left:1649.6px">&lt;/<span class="t">div</span>&gt;</div>
<div class="ln" style="top:243.0px">78</div>
<div class="cl" style="top:243.0px;left:1649.6px">&lt;<span class="t">div</span> <span class="a">class</span>=<span class="s">&quot;opciones d-flex align-items-center&quot;</span>&gt;</div>
<div class="ln" style="top:260.0px">79</div>
<div class="cl" style="top:260.0px;left:1681.6px">&lt;<span class="t">a</span> <span class="a">class</span>=<span class="s">&quot;btn boton-opcion boton-opcion-ver ripple&quot;</span> <span class="a">target</span>=<span class="s">&quot;_blank&quot;</span> <span class="a">title</span>=<span class="s">&quot;Ver&quot;</span> <span class="a">href</span>=<span class="s">&quot;{% url &#x27;novedadDetalle&#x27;</span></div>
<div class="cl" style="top:277.0px;left:1681.6px"><span class="s">pk=d.noticia.pk %}&quot;</span> <span class="a">role</span>=<span class="s">&quot;button&quot;</span>&gt;&lt;<span class="t">i</span> <span class="a">class</span>=<span class="s">&quot;far fa-eye&quot;</span>&gt;&lt;/<span class="t">i</span>&gt;&lt;/<span class="t">a</span>&gt;</div>
<div class="ln" style="top:294.0px">80</div>
<div class="cl" style="top:294.0px;left:1649.6px">&lt;/<span class="t">div</span>&gt;</div>
<div class="ln" style="top:311.0px">81</div>
<div class="cl" style="top:311.0px;left:1617.6px">&lt;/<span class="t">div</span>&gt;</div>
<div class="ln" style="top:328.0px">82</div>
<div class="cl" style="top:328.0px;left:1585.6px">{% endfor %}</div>
<div class="ln" style="top:345.0px">83</div>
<div class="cl" style="top:345.0px;left:1585.6px">&lt;/<span class="t">div</span>&gt;</div>
<div class="ln" style="top:362.0px">84</div>
<div class="cl" style="top:362.0px;left:1553.6px">&lt;/<span class="t">div</span>&gt;</div>
<div class="ln" style="top:379.0px">85</div>
<div class="cl" style="top:379.0px;left:1553.6px">&lt;<span class="t">div</span> <span class="a">class</span>=<span class="s">&quot;col-12 col-sm-12 col-md-6 col-lg-6&quot;</span>&gt;</div>
<div class="ln" style="top:396.0px">86</div>
<div class="cl" style="top:396.0px;left:1585.6px">&lt;<span class="t">div</span> <span class="a">class</span>=<span class="s">&quot;d-flex justify-content-between&quot;</span>&gt;</div>
<div class="ln" style="top:413.0px">87</div>
<div class="cl" style="top:413.0px;left:1617.6px">&lt;<span class="t">div</span> <span class="a">class</span>=<span class="s">&quot;titulo cl-effect-4 titulo-index-difusiones margin-top-40&quot;</span>&gt;</div>
<div style="position:absolute;left:1366px;width:54px;height:17px;background:#3e3d32;top:428.5px"></div>
<div class="ln cur" style="top:430.0px">88</div>
<div class="cl" style="top:430.0px;left:1649.6px">Mails de f</div>
<div class="ln" style="top:447.0px">89</div>
<div class="cl" style="top:447.0px;left:1617.6px">&lt;/<span class="t">div</span>&gt;</div>
<div class="ln" style="top:464.0px">90</div>
<div class="cl" style="top:464.0px;left:1617.6px">&lt;<span class="t">div</span> <span class="a">class</span>=<span class="s">&quot;d-flex align-items-start&quot;</span>&gt;</div>
<div class="ln" style="top:481.0px">91</div>
<div class="cl" style="top:481.0px;left:1649.6px">&lt;<span class="t">a</span> <span class="a">href</span>=<span class="s">&quot;/difusion/crearmaildifusion&quot;</span> <span class="a">title</span>=<span class="s">&quot;Crear mail de difusión&quot;</span> <span class="a">class</span>=<span class="s">&quot;btn boton-opcion</span></div>
<div class="cl" style="top:498.0px;left:1649.6px"><span class="s">boton-opcion-agregarNoticiaIndex ripple&quot;</span>&gt;</div>
<div class="ln" style="top:515.0px">92</div>
<div class="cl" style="top:515.0px;left:1681.6px">&lt;<span class="t">i</span> <span class="a">class</span>=<span class="s">&quot;fas fa-plus&quot;</span>&gt;&lt;/<span class="t">i</span>&gt;</div>
<div class="ln" style="top:532.0px">93</div>
<div class="cl" style="top:532.0px;left:1649.6px">&lt;/<span class="t">a</span>&gt;</div>
<div class="ln" style="top:549.0px">94</div>
<div class="cl" style="top:549.0px;left:1617.6px">&lt;/<span class="t">div</span>&gt;</div>
<div class="ln" style="top:566.0px">95</div>
<div class="cl" style="top:566.0px;left:1585.6px">&lt;/<span class="t">div</span>&gt;</div>
<div class="ln" style="top:583.0px">96</div>
<div class="cl" style="top:583.0px;left:1585.6px">&lt;<span class="t">div</span> <span class="a">class</span>=<span class="s">&quot;noticia-list noticias-difusiones-index&quot;</span>&gt;</div>
<div class="ln" style="top:600.0px">97</div>
<div class="cl" style="top:600.0px;left:1585.6px">{% for d in difusiones %}</div>
<div class="ln" style="top:617.0px">98</div>
<div class="cl" style="top:617.0px;left:1617.6px">&lt;<span class="t">div</span> <span class="a">class</span>=<span class="s">&quot;noticia-item-list elevation2 d-flex justify-content-between&quot;</span>&gt;</div>
<div class="ln" style="top:634.0px">99</div>
<div class="cl" style="top:634.0px;left:1649.6px">&lt;<span class="t">div</span> <span class="a">class</span>=<span class="s">&quot;descripcion align-items-center&quot;</span>&gt;</div>
<div class="ln" style="top:651.0px">100</div>
<div class="cl" style="top:651.0px;left:1681.6px">&lt;<span class="t">div</span> <span class="a">class</span>=<span class="s">&quot;noticia-fecha&quot;</span>&gt;</div>
<div class="ln" style="top:668.0px">101</div>
<div class="cl" style="top:668.0px;left:1713.6px">{{d.fecha}}</div>
<div class="ln" style="top:685.0px">102</div>
<div class="cl" style="top:685.0px;left:1681.6px">&lt;/<span class="t">div</span>&gt;</div>
<div class="ln" style="top:702.0px">103</div>
<div class="cl" style="top:702.0px;left:1681.6px">&lt;<span class="t">div</span> <span class="a">class</span>=<span class="s">&quot;noticia-titulo&quot;</span>&gt;</div>
</div>
</body></html>
